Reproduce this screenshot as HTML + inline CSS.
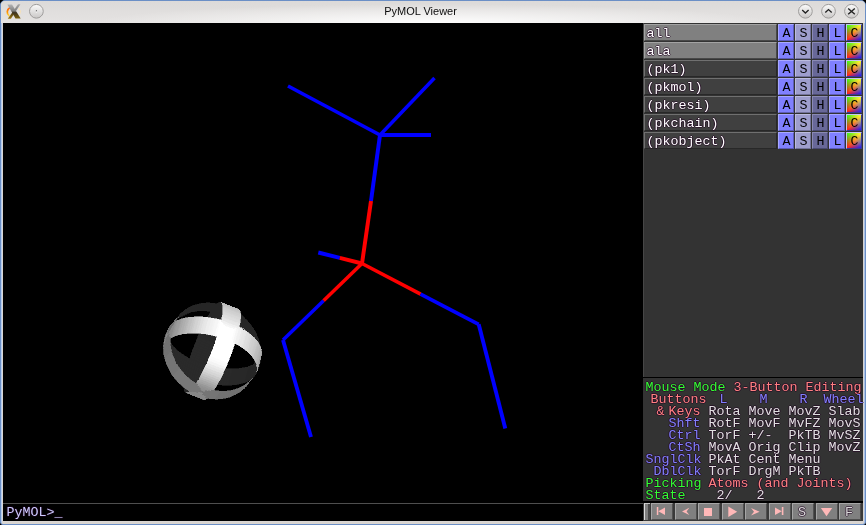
<!DOCTYPE html>
<html><head><meta charset="utf-8"><title>PyMOL Viewer</title>
<style>
html,body{margin:0;padding:0;background:#000;}
body{width:866px;height:525px;position:relative;overflow:hidden;font-family:"Liberation Sans",sans-serif;}
.abs{position:absolute;}
#win{position:absolute;left:0;top:0;width:864px;height:523px;border:1px solid #6b8fc6;border-radius:5px 5px 3px 3px;background:#d9d5d1;box-shadow:inset 1px 1px 0 #b4caec,inset -1px 0 0 #aac2e8;}
#tb{position:absolute;left:1px;top:1px;width:864px;height:22px;background:radial-gradient(ellipse 340px 19px at 50% 100%,rgba(255,255,255,0.95),rgba(255,255,255,0) 100%),linear-gradient(#dcdad9,#e5e3e2);border-radius:4px 4px 0 0;}
#title{position:absolute;left:0;top:4px;width:841px;text-align:center;font-size:11px;color:#0c0c0c;line-height:14px;will-change:transform;}
#view{position:absolute;left:3px;top:23px;width:640px;height:480px;background:#000;}
#cmd{position:absolute;left:3px;top:503px;width:640px;height:18px;background:#000;border-top:1px solid #4e4e4e;box-sizing:border-box;}
#panel{position:absolute;left:643px;top:23px;width:220px;height:498px;background:#333;}
.t{position:absolute;white-space:pre;font-family:"Liberation Mono","DejaVu Sans Mono",monospace;font-size:13.33px;line-height:12px;height:12px;}
.h{text-shadow:1px 0 0 rgba(32,0,32,.55),-1px 0 0 rgba(32,0,32,.55),0 1px 0 rgba(32,0,32,.55),0 -1px 0 rgba(32,0,32,.55);}
.nm{position:absolute;left:644px;width:133px;height:17px;box-sizing:border-box;}
.bt{position:absolute;width:16px;height:17px;box-sizing:border-box;}
</style></head><body>
<div id="win"></div>
<div id="tb"></div>
<div id="title">PyMOL Viewer</div>
<div id="view"></div>
<div id="cmd"></div>
<div id="panel"></div>

<svg class="abs" style="left:0;top:0" width="866" height="24">
<defs>
<linearGradient id="xg1" x1="0" y1="0" x2="0" y2="1"><stop offset="0" stop-color="#b4b4b4"/><stop offset="0.45" stop-color="#808080"/><stop offset="0.58" stop-color="#3c3220"/><stop offset="1" stop-color="#7a5e0a"/></linearGradient>
<linearGradient id="xg2" x1="0" y1="0" x2="0" y2="1"><stop offset="0" stop-color="#a8a8a8"/><stop offset="0.48" stop-color="#7a7a7a"/><stop offset="0.6" stop-color="#4c3a14"/><stop offset="1" stop-color="#a07c12"/></linearGradient>
<linearGradient id="og" x1="0" y1="0" x2="0" y2="1"><stop offset="0" stop-color="#ff5a10"/><stop offset="0.6" stop-color="#ff9a00"/><stop offset="1" stop-color="#ffd840"/></linearGradient>
<linearGradient id="bg1" x1="0" y1="0" x2="0" y2="1"><stop offset="0" stop-color="#fbfbfb"/><stop offset="1" stop-color="#c9c7c6"/></linearGradient>
</defs>
<path d="M10.1 7.4 A7 5.7 0 0 0 9.3 16" fill="none" stroke="url(#og)" stroke-width="1.7"/>
<path d="M18.6 8 A7 5.7 0 0 1 19.6 14.6" fill="none" stroke="#ffe2a8" stroke-width="0.9" opacity="0.85"/>
<path d="M18 4.3 L20.4 4.3 L10.9 18.7 L7.8 18.7 Z" fill="url(#xg2)"/>
<path d="M7.4 4.4 L12 4.4 L20.7 18.6 L15.5 18.6 Z" fill="url(#xg1)"/>

<circle cx="36.4" cy="11.6" r="7.4" fill="#f4f3f2" opacity="0.9"/><circle cx="36.4" cy="11.3" r="6.9" fill="url(#bg1)" stroke="#9b9998" stroke-width="1"/>
<circle cx="805.4" cy="11.6" r="7.4" fill="#f4f3f2" opacity="0.9"/><circle cx="805.4" cy="11.3" r="6.9" fill="url(#bg1)" stroke="#9b9998" stroke-width="1"/>
<circle cx="828.5" cy="11.6" r="7.4" fill="#f4f3f2" opacity="0.9"/><circle cx="828.5" cy="11.3" r="6.9" fill="url(#bg1)" stroke="#9b9998" stroke-width="1"/>
<circle cx="851.5" cy="11.6" r="7.4" fill="#f4f3f2" opacity="0.9"/><circle cx="851.5" cy="11.3" r="6.9" fill="url(#bg1)" stroke="#9b9998" stroke-width="1"/>
<rect x="35.9" y="10.4" width="1.1" height="1.1" fill="#333"/><rect x="35.9" y="11.5" width="1.1" height="1" fill="#fff"/>
<path d="M802.2 10 L805.4 13 L808.6 10" fill="none" stroke="#222" stroke-width="1.35"/>
<path d="M825.3 12.6 L828.5 9.6 L831.7 12.6" fill="none" stroke="#222" stroke-width="1.35"/>
<path d="M848.2 8.4 L854.8 14.2 M854.8 8.4 L848.2 14.2" fill="none" stroke="#222" stroke-width="1.35"/>
</svg>
<svg class="abs" style="left:0;top:0" width="866" height="525">
<line x1="288" y1="86" x2="380" y2="135" stroke="#0000ff" stroke-width="3.66"/>
<line x1="380" y1="135" x2="434.5" y2="78" stroke="#0000ff" stroke-width="3.50"/>
<line x1="380" y1="135" x2="431" y2="135" stroke="#0000ff" stroke-width="4.00"/>
<line x1="380" y1="135" x2="371" y2="201" stroke="#0000ff" stroke-width="3.96"/>
<line x1="371" y1="201" x2="362" y2="263.5" stroke="#ff0000" stroke-width="3.96"/>
<line x1="318.3" y1="252.5" x2="339.8" y2="257.9" stroke="#0000ff" stroke-width="3.89"/>
<line x1="339.8" y1="257.9" x2="362" y2="263.5" stroke="#ff0000" stroke-width="3.89"/>
<line x1="362" y1="263.5" x2="323.5" y2="300.8" stroke="#ff0000" stroke-width="3.50"/>
<line x1="323.5" y1="300.8" x2="283" y2="340" stroke="#0000ff" stroke-width="3.50"/>
<line x1="283" y1="340" x2="311" y2="437" stroke="#0000ff" stroke-width="3.86"/>
<line x1="362" y1="263.5" x2="420.6" y2="294.2" stroke="#ff0000" stroke-width="3.66"/>
<line x1="420.6" y1="294.2" x2="478.7" y2="324.3" stroke="#0000ff" stroke-width="3.67"/>
<line x1="478.7" y1="324.3" x2="505.3" y2="428.5" stroke="#0000ff" stroke-width="3.89"/>
</svg>
<svg class="abs" style="left:0;top:0" width="866" height="525" shape-rendering="crispEdges" stroke-width="0.6">
<g fill="#262626" stroke="#262626"><polygon points="220.9,302.5 220.5,302.4 224.9,304.1 225.4,304.3"/><polygon points="225.4,304.3 224.9,304.1 229.3,305.9 229.8,306.0"/><polygon points="229.8,306.0 229.3,305.9 233.7,307.6 234.2,307.7"/><polygon points="234.2,307.7 233.7,307.6 238.1,309.3 238.6,309.4"/><polygon points="220.5,302.4 219.9,302.4 224.4,304.2 224.9,304.1"/><polygon points="224.9,304.1 224.4,304.2 228.8,305.9 229.3,305.9"/><polygon points="229.3,305.9 228.8,305.9 233.2,307.6 233.7,307.6"/><polygon points="233.7,307.6 233.2,307.6 237.6,309.3 238.1,309.3"/><polygon points="219.9,302.4 219.4,302.6 223.8,304.3 224.4,304.2"/><polygon points="224.4,304.2 223.8,304.3 228.2,306.0 228.8,305.9"/><polygon points="228.8,305.9 228.2,306.0 232.6,307.7 233.2,307.6"/><polygon points="233.2,307.6 232.6,307.7 237.1,309.4 237.6,309.3"/><polygon points="219.4,302.6 218.8,302.8 223.2,304.5 223.8,304.3"/><polygon points="223.8,304.3 223.2,304.5 227.6,306.3 228.2,306.0"/><polygon points="228.2,306.0 227.6,306.3 232.0,308.0 232.6,307.7"/><polygon points="232.6,307.7 232.0,308.0 236.4,309.7 237.1,309.4"/><polygon points="218.8,302.8 218.1,303.2 222.5,304.9 223.2,304.5"/><polygon points="223.2,304.5 222.5,304.9 227.0,306.6 227.6,306.3"/><polygon points="227.6,306.3 227.0,306.6 231.4,308.4 232.0,308.0"/><polygon points="232.0,308.0 231.4,308.4 235.8,310.1 236.4,309.7"/><polygon points="218.1,303.2 217.4,303.7 221.8,305.4 222.5,304.9"/><polygon points="222.5,304.9 221.8,305.4 226.3,307.1 227.0,306.6"/><polygon points="227.0,306.6 226.3,307.1 230.7,308.9 231.4,308.4"/><polygon points="231.4,308.4 230.7,308.9 235.1,310.6 235.8,310.1"/><polygon points="217.4,303.7 216.7,304.3 221.1,306.0 221.8,305.4"/><polygon points="221.8,305.4 221.1,306.0 225.5,307.8 226.3,307.1"/><polygon points="226.3,307.1 225.5,307.8 230.0,309.5 230.7,308.9"/><polygon points="230.7,308.9 230.0,309.5 234.4,311.2 235.1,310.6"/><polygon points="216.7,304.3 215.9,305.1 220.3,306.8 221.1,306.0"/><polygon points="221.1,306.0 220.3,306.8 224.8,308.5 225.5,307.8"/><polygon points="225.5,307.8 224.8,308.5 229.2,310.2 230.0,309.5"/><polygon points="230.0,309.5 229.2,310.2 233.6,311.9 234.4,311.2"/><polygon points="215.9,305.1 215.1,305.9 219.5,307.6 220.3,306.8"/><polygon points="220.3,306.8 219.5,307.6 224.0,309.4 224.8,308.5"/><polygon points="224.8,308.5 224.0,309.4 228.4,311.1 229.2,310.2"/><polygon points="229.2,310.2 228.4,311.1 232.8,312.8 233.6,311.9"/><polygon points="215.1,305.9 214.3,306.9 218.7,308.6 219.5,307.6"/><polygon points="219.5,307.6 218.7,308.6 223.1,310.3 224.0,309.4"/><polygon points="224.0,309.4 223.1,310.3 227.6,312.0 228.4,311.1"/><polygon points="228.4,311.1 227.6,312.0 232.0,313.8 232.8,312.8"/><polygon points="214.3,306.9 213.4,308.0 217.9,309.7 218.7,308.6"/><polygon points="218.7,308.6 217.9,309.7 222.3,311.4 223.1,310.3"/><polygon points="223.1,310.3 222.3,311.4 226.7,313.1 227.6,312.0"/><polygon points="227.6,312.0 226.7,313.1 231.1,314.8 232.0,313.8"/><polygon points="213.4,308.0 212.5,309.2 217.0,310.9 217.9,309.7"/><polygon points="217.9,309.7 217.0,310.9 221.4,312.6 222.3,311.4"/><polygon points="222.3,311.4 221.4,312.6 225.8,314.3 226.7,313.1"/><polygon points="226.7,313.1 225.8,314.3 230.2,316.0 231.1,314.8"/><polygon points="212.5,309.2 211.6,310.5 216.0,312.2 217.0,310.9"/><polygon points="217.0,310.9 216.0,312.2 220.5,313.9 221.4,312.6"/><polygon points="221.4,312.6 220.5,313.9 224.9,315.6 225.8,314.3"/><polygon points="225.8,314.3 224.9,315.6 229.3,317.3 230.2,316.0"/><polygon points="211.6,310.5 210.7,311.9 215.1,313.6 216.0,312.2"/><polygon points="216.0,312.2 215.1,313.6 219.5,315.3 220.5,313.9"/><polygon points="220.5,313.9 219.5,315.3 224.0,317.0 224.9,315.6"/><polygon points="224.9,315.6 224.0,317.0 228.4,318.7 229.3,317.3"/><polygon points="210.7,311.9 209.7,313.4 214.2,315.1 215.1,313.6"/><polygon points="215.1,313.6 214.2,315.1 218.6,316.8 219.5,315.3"/><polygon points="219.5,315.3 218.6,316.8 223.0,318.5 224.0,317.0"/><polygon points="224.0,317.0 223.0,318.5 227.4,320.2 228.4,318.7"/><polygon points="209.7,313.4 208.8,315.0 213.2,316.7 214.2,315.1"/><polygon points="214.2,315.1 213.2,316.7 217.6,318.4 218.6,316.8"/><polygon points="218.6,316.8 217.6,318.4 222.0,320.1 223.0,318.5"/><polygon points="223.0,318.5 222.0,320.1 226.4,321.8 227.4,320.2"/><polygon points="208.8,315.0 207.8,316.6 212.2,318.3 213.2,316.7"/><polygon points="213.2,316.7 212.2,318.3 216.6,320.1 217.6,318.4"/><polygon points="217.6,318.4 216.6,320.1 221.0,321.8 222.0,320.1"/><polygon points="222.0,320.1 221.0,321.8 225.5,323.5 226.4,321.8"/><polygon points="207.8,316.6 206.8,318.4 211.2,320.1 212.2,318.3"/><polygon points="212.2,318.3 211.2,320.1 215.6,321.8 216.6,320.1"/><polygon points="216.6,320.1 215.6,321.8 220.0,323.5 221.0,321.8"/><polygon points="221.0,321.8 220.0,323.5 224.5,325.3 225.5,323.5"/><polygon points="261.1,355.6 260.7,356.7 259.6,360.8 260.0,359.6"/><polygon points="260.0,359.6 259.6,360.8 258.5,364.9 258.9,363.7"/><polygon points="258.9,363.7 258.5,364.9 257.4,368.9 257.8,367.8"/><polygon points="257.8,367.8 257.4,368.9 256.3,373.0 256.7,371.8"/><polygon points="260.7,356.7 260.1,357.9 259.0,361.9 259.6,360.8"/><polygon points="259.6,360.8 259.0,361.9 257.9,366.0 258.5,364.9"/><polygon points="258.5,364.9 257.9,366.0 256.9,370.1 257.4,368.9"/><polygon points="257.4,368.9 256.9,370.1 255.8,374.1 256.3,373.0"/><polygon points="260.1,357.9 259.5,359.0 258.4,363.0 259.0,361.9"/><polygon points="259.0,361.9 258.4,363.0 257.3,367.1 257.9,366.0"/><polygon points="257.9,366.0 257.3,367.1 256.2,371.2 256.9,370.1"/><polygon points="256.9,370.1 256.2,371.2 255.1,375.2 255.8,374.1"/><polygon points="259.5,359.0 258.7,360.0 257.6,364.1 258.4,363.0"/><polygon points="258.4,363.0 257.6,364.1 256.5,368.2 257.3,367.1"/><polygon points="257.3,367.1 256.5,368.2 255.4,372.2 256.2,371.2"/><polygon points="256.2,371.2 255.4,372.2 254.3,376.3 255.1,375.2"/><polygon points="258.7,360.0 257.8,361.0 256.7,365.1 257.6,364.1"/><polygon points="257.6,364.1 256.7,365.1 255.6,369.2 256.5,368.2"/><polygon points="256.5,368.2 255.6,369.2 254.5,373.2 255.4,372.2"/><polygon points="255.4,372.2 254.5,373.2 253.4,377.3 254.3,376.3"/><polygon points="257.8,361.0 256.7,362.0 255.6,366.0 256.7,365.1"/><polygon points="256.7,365.1 255.6,366.0 254.6,370.1 255.6,369.2"/><polygon points="255.6,369.2 254.6,370.1 253.5,374.2 254.5,373.2"/><polygon points="254.5,373.2 253.5,374.2 252.4,378.2 253.4,377.3"/><polygon points="256.7,362.0 255.6,362.9 254.5,366.9 255.6,366.0"/><polygon points="255.6,366.0 254.5,366.9 253.4,371.0 254.6,370.1"/><polygon points="254.6,370.1 253.4,371.0 252.3,375.1 253.5,374.2"/><polygon points="253.5,374.2 252.3,375.1 251.3,379.1 252.4,378.2"/><polygon points="255.6,362.9 254.3,363.7 253.2,367.8 254.5,366.9"/><polygon points="254.5,366.9 253.2,367.8 252.2,371.9 253.4,371.0"/><polygon points="253.4,371.0 252.2,371.9 251.1,375.9 252.3,375.1"/><polygon points="252.3,375.1 251.1,375.9 250.0,380.0 251.3,379.1"/><polygon points="254.3,363.7 253.0,364.5 251.9,368.6 253.2,367.8"/><polygon points="253.2,367.8 251.9,368.6 250.8,372.6 252.2,371.9"/><polygon points="252.2,371.9 250.8,372.6 249.7,376.7 251.1,375.9"/><polygon points="251.1,375.9 249.7,376.7 248.6,380.8 250.0,380.0"/><polygon points="253.0,364.5 251.5,365.2 250.4,369.3 251.9,368.6"/><polygon points="251.9,368.6 250.4,369.3 249.3,373.4 250.8,372.6"/><polygon points="250.8,372.6 249.3,373.4 248.2,377.4 249.7,376.7"/><polygon points="249.7,376.7 248.2,377.4 247.2,381.5 248.6,380.8"/><polygon points="251.5,365.2 249.9,365.9 248.8,370.0 250.4,369.3"/><polygon points="250.4,369.3 248.8,370.0 247.8,374.0 249.3,373.4"/><polygon points="249.3,373.4 247.8,374.0 246.7,378.1 248.2,377.4"/><polygon points="248.2,377.4 246.7,378.1 245.6,382.2 247.2,381.5"/><polygon points="249.9,365.9 248.3,366.5 247.2,370.6 248.8,370.0"/><polygon points="248.8,370.0 247.2,370.6 246.1,374.6 247.8,374.0"/><polygon points="247.8,374.0 246.1,374.6 245.0,378.7 246.7,378.1"/><polygon points="246.7,378.1 245.0,378.7 243.9,382.8 245.6,382.2"/><polygon points="253.3,372.1 252.6,374.2 254.3,372.2 254.9,370.1"/><polygon points="254.9,370.1 254.3,372.2 255.9,370.3 256.5,368.2"/><polygon points="256.5,368.2 255.9,370.3 257.5,368.3 258.1,366.2"/><polygon points="258.1,366.2 257.5,368.3 259.1,366.3 259.7,364.2"/><polygon points="252.6,374.2 251.9,376.2 253.5,374.3 254.3,372.2"/><polygon points="254.3,372.2 253.5,374.3 255.1,372.3 255.9,370.3"/><polygon points="255.9,370.3 255.1,372.3 256.7,370.3 257.5,368.3"/><polygon points="257.5,368.3 256.7,370.3 258.4,368.4 259.1,366.3"/><polygon points="251.9,376.2 251.0,378.2 252.6,376.3 253.5,374.3"/><polygon points="253.5,374.3 252.6,376.3 254.3,374.3 255.1,372.3"/><polygon points="255.1,372.3 254.3,374.3 255.9,372.3 256.7,370.3"/><polygon points="256.7,370.3 255.9,372.3 257.5,370.4 258.4,368.4"/><polygon points="251.0,378.2 250.0,380.2 251.7,378.2 252.6,376.3"/><polygon points="252.6,376.3 251.7,378.2 253.3,376.2 254.3,374.3"/><polygon points="254.3,374.3 253.3,376.2 254.9,374.3 255.9,372.3"/><polygon points="255.9,372.3 254.9,374.3 256.5,372.3 257.5,370.4"/><polygon points="250.0,380.2 248.9,382.0 250.6,380.1 251.7,378.2"/><polygon points="251.7,378.2 250.6,380.1 252.2,378.1 253.3,376.2"/><polygon points="253.3,376.2 252.2,378.1 253.8,376.1 254.9,374.3"/><polygon points="254.9,374.3 253.8,376.1 255.4,374.2 256.5,372.3"/><polygon points="248.9,382.0 247.7,383.8 249.4,381.8 250.6,380.1"/><polygon points="250.6,380.1 249.4,381.8 251.0,379.9 252.2,378.1"/><polygon points="252.2,378.1 251.0,379.9 252.6,377.9 253.8,376.1"/><polygon points="253.8,376.1 252.6,377.9 254.2,376.0 255.4,374.2"/><polygon points="247.7,383.8 246.4,385.5 248.1,383.6 249.4,381.8"/><polygon points="249.4,381.8 248.1,383.6 249.7,381.6 251.0,379.9"/><polygon points="251.0,379.9 249.7,381.6 251.3,379.6 252.6,377.9"/><polygon points="252.6,377.9 251.3,379.6 252.9,377.7 254.2,376.0"/><polygon points="171.7,324.3 173.1,322.7 174.7,320.7 173.3,322.4"/><polygon points="173.3,322.4 174.7,320.7 176.3,318.8 174.9,320.4"/><polygon points="174.9,320.4 176.3,318.8 177.9,316.8 176.5,318.4"/><polygon points="176.5,318.4 177.9,316.8 179.6,314.9 178.2,316.5"/><polygon points="173.1,322.7 174.6,321.2 176.2,319.2 174.7,320.7"/><polygon points="174.7,320.7 176.2,319.2 177.8,317.3 176.3,318.8"/><polygon points="176.3,318.8 177.8,317.3 179.5,315.3 177.9,316.8"/><polygon points="177.9,316.8 179.5,315.3 181.1,313.3 179.6,314.9"/><polygon points="174.6,321.2 176.2,319.7 177.8,317.8 176.2,319.2"/><polygon points="176.2,319.2 177.8,317.8 179.4,315.8 177.8,317.3"/><polygon points="177.8,317.3 179.4,315.8 181.1,313.8 179.5,315.3"/><polygon points="179.5,315.3 181.1,313.8 182.7,311.9 181.1,313.3"/><polygon points="176.2,319.7 177.9,318.4 179.5,316.4 177.8,317.8"/><polygon points="177.8,317.8 179.5,316.4 181.1,314.5 179.4,315.8"/><polygon points="179.4,315.8 181.1,314.5 182.8,312.5 181.1,313.8"/><polygon points="181.1,313.8 182.8,312.5 184.4,310.5 182.7,311.9"/><polygon points="177.9,318.4 179.7,317.1 181.3,315.2 179.5,316.4"/><polygon points="179.5,316.4 181.3,315.2 182.9,313.2 181.1,314.5"/><polygon points="181.1,314.5 182.9,313.2 184.5,311.3 182.8,312.5"/><polygon points="182.8,312.5 184.5,311.3 186.1,309.3 184.4,310.5"/><polygon points="179.7,317.1 181.5,316.0 183.2,314.0 181.3,315.2"/><polygon points="181.3,315.2 183.2,314.0 184.8,312.1 182.9,313.2"/><polygon points="182.9,313.2 184.8,312.1 186.4,310.1 184.5,311.3"/><polygon points="184.5,311.3 186.4,310.1 188.0,308.2 186.1,309.3"/><polygon points="181.5,316.0 183.5,315.0 185.1,313.0 183.2,314.0"/><polygon points="183.2,314.0 185.1,313.0 186.7,311.0 184.8,312.1"/><polygon points="184.8,312.1 186.7,311.0 188.3,309.1 186.4,310.1"/><polygon points="186.4,310.1 188.3,309.1 189.9,307.1 188.0,308.2"/><polygon points="183.5,315.0 185.5,314.0 187.1,312.1 185.1,313.0"/><polygon points="185.1,313.0 187.1,312.1 188.7,310.1 186.7,311.0"/><polygon points="186.7,311.0 188.7,310.1 190.3,308.2 188.3,309.1"/><polygon points="188.3,309.1 190.3,308.2 191.9,306.2 189.9,307.1"/><polygon points="185.5,314.0 187.5,313.2 189.2,311.3 187.1,312.1"/><polygon points="187.1,312.1 189.2,311.3 190.8,309.3 188.7,310.1"/><polygon points="188.7,310.1 190.8,309.3 192.4,307.3 190.3,308.2"/><polygon points="190.3,308.2 192.4,307.3 194.0,305.4 191.9,306.2"/><polygon points="187.5,313.2 189.7,312.5 191.3,310.6 189.2,311.3"/><polygon points="189.2,311.3 191.3,310.6 192.9,308.6 190.8,309.3"/><polygon points="190.8,309.3 192.9,308.6 194.5,306.6 192.4,307.3"/><polygon points="192.4,307.3 194.5,306.6 196.1,304.7 194.0,305.4"/><polygon points="189.7,312.5 191.8,311.9 193.5,310.0 191.3,310.6"/><polygon points="191.3,310.6 193.5,310.0 195.1,308.0 192.9,308.6"/><polygon points="192.9,308.6 195.1,308.0 196.7,306.1 194.5,306.6"/><polygon points="194.5,306.6 196.7,306.1 198.3,304.1 196.1,304.7"/><polygon points="191.8,311.9 194.1,311.5 195.7,309.5 193.5,310.0"/><polygon points="193.5,310.0 195.7,309.5 197.3,307.5 195.1,308.0"/><polygon points="195.1,308.0 197.3,307.5 198.9,305.6 196.7,306.1"/><polygon points="196.7,306.1 198.9,305.6 200.6,303.6 198.3,304.1"/><polygon points="194.1,311.5 196.3,311.1 198.0,309.2 195.7,309.5"/><polygon points="195.7,309.5 198.0,309.2 199.6,307.2 197.3,307.5"/><polygon points="197.3,307.5 199.6,307.2 201.2,305.2 198.9,305.6"/><polygon points="198.9,305.6 201.2,305.2 202.8,303.3 200.6,303.6"/><polygon points="196.3,311.1 198.7,310.9 200.3,308.9 198.0,309.2"/><polygon points="198.0,309.2 200.3,308.9 201.9,307.0 199.6,307.2"/><polygon points="199.6,307.2 201.9,307.0 203.5,305.0 201.2,305.2"/><polygon points="201.2,305.2 203.5,305.0 205.1,303.1 202.8,303.3"/><polygon points="198.7,310.9 201.0,310.8 202.6,308.8 200.3,308.9"/><polygon points="200.3,308.9 202.6,308.8 204.2,306.9 201.9,307.0"/><polygon points="201.9,307.0 204.2,306.9 205.8,304.9 203.5,305.0"/><polygon points="203.5,305.0 205.8,304.9 207.5,302.9 205.1,303.1"/><polygon points="201.0,310.8 203.3,310.8 205.0,308.8 202.6,308.8"/><polygon points="202.6,308.8 205.0,308.8 206.6,306.9 204.2,306.9"/><polygon points="204.2,306.9 206.6,306.9 208.2,304.9 205.8,304.9"/><polygon points="205.8,304.9 208.2,304.9 209.8,303.0 207.5,302.9"/><polygon points="203.3,310.8 205.7,310.9 207.3,309.0 205.0,308.8"/><polygon points="205.0,308.8 207.3,309.0 208.9,307.0 206.6,306.9"/><polygon points="206.6,306.9 208.9,307.0 210.6,305.1 208.2,304.9"/><polygon points="208.2,304.9 210.6,305.1 212.2,303.1 209.8,303.0"/><polygon points="205.7,310.9 208.1,311.2 209.7,309.2 207.3,309.0"/><polygon points="207.3,309.0 209.7,309.2 211.3,307.3 208.9,307.0"/><polygon points="208.9,307.0 211.3,307.3 212.9,305.3 210.6,305.1"/><polygon points="210.6,305.1 212.9,305.3 214.6,303.4 212.2,303.1"/><polygon points="208.1,311.2 210.5,311.6 212.1,309.6 209.7,309.2"/><polygon points="209.7,309.2 212.1,309.6 213.7,307.7 211.3,307.3"/><polygon points="211.3,307.3 213.7,307.7 215.3,305.7 212.9,305.3"/><polygon points="212.9,305.3 215.3,305.7 216.9,303.7 214.6,303.4"/><polygon points="210.5,311.6 212.8,312.1 214.5,310.1 212.1,309.6"/><polygon points="212.1,309.6 214.5,310.1 216.1,308.1 213.7,307.7"/><polygon points="213.7,307.7 216.1,308.1 217.7,306.2 215.3,305.7"/><polygon points="215.3,305.7 217.7,306.2 219.3,304.2 216.9,303.7"/><polygon points="212.8,312.1 215.2,312.7 216.8,310.7 214.5,310.1"/><polygon points="214.5,310.1 216.8,310.7 218.5,308.8 216.1,308.1"/><polygon points="216.1,308.1 218.5,308.8 220.1,306.8 217.7,306.2"/><polygon points="217.7,306.2 220.1,306.8 221.7,304.8 219.3,304.2"/><polygon points="215.2,312.7 217.6,313.4 219.2,311.5 216.8,310.7"/><polygon points="216.8,310.7 219.2,311.5 220.8,309.5 218.5,308.8"/><polygon points="218.5,308.8 220.8,309.5 222.4,307.5 220.1,306.8"/><polygon points="220.1,306.8 222.4,307.5 224.0,305.6 221.7,304.8"/><polygon points="217.6,313.4 219.9,314.3 221.5,312.3 219.2,311.5"/><polygon points="219.2,311.5 221.5,312.3 223.1,310.3 220.8,309.5"/><polygon points="220.8,309.5 223.1,310.3 224.8,308.4 222.4,307.5"/><polygon points="222.4,307.5 224.8,308.4 226.4,306.4 224.0,305.6"/><polygon points="219.9,314.3 222.2,315.2 223.8,313.2 221.5,312.3"/><polygon points="221.5,312.3 223.8,313.2 225.4,311.3 223.1,310.3"/><polygon points="223.1,310.3 225.4,311.3 227.1,309.3 224.8,308.4"/><polygon points="224.8,308.4 227.1,309.3 228.7,307.4 226.4,306.4"/><polygon points="222.2,315.2 224.5,316.3 226.1,314.3 223.8,313.2"/><polygon points="223.8,313.2 226.1,314.3 227.7,312.3 225.4,311.3"/><polygon points="225.4,311.3 227.7,312.3 229.3,310.4 227.1,309.3"/><polygon points="227.1,309.3 229.3,310.4 230.9,308.4 228.7,307.4"/><polygon points="224.5,316.3 226.7,317.4 228.3,315.5 226.1,314.3"/><polygon points="226.1,314.3 228.3,315.5 229.9,313.5 227.7,312.3"/><polygon points="227.7,312.3 229.9,313.5 231.5,311.6 229.3,310.4"/><polygon points="229.3,310.4 231.5,311.6 233.2,309.6 230.9,308.4"/><polygon points="226.7,317.4 228.8,318.7 230.5,316.7 228.3,315.5"/><polygon points="228.3,315.5 230.5,316.7 232.1,314.8 229.9,313.5"/><polygon points="229.9,313.5 232.1,314.8 233.7,312.8 231.5,311.6"/><polygon points="231.5,311.6 233.7,312.8 235.3,310.9 233.2,309.6"/><polygon points="228.8,318.7 231.0,320.1 232.6,318.1 230.5,316.7"/><polygon points="230.5,316.7 232.6,318.1 234.2,316.2 232.1,314.8"/><polygon points="232.1,314.8 234.2,316.2 235.8,314.2 233.7,312.8"/><polygon points="233.7,312.8 235.8,314.2 237.4,312.2 235.3,310.9"/><polygon points="231.0,320.1 233.0,321.5 234.6,319.6 232.6,318.1"/><polygon points="232.6,318.1 234.6,319.6 236.3,317.6 234.2,316.2"/><polygon points="234.2,316.2 236.3,317.6 237.9,315.7 235.8,314.2"/><polygon points="235.8,314.2 237.9,315.7 239.5,313.7 237.4,312.2"/><polygon points="233.0,321.5 235.0,323.1 236.6,321.1 234.6,319.6"/><polygon points="234.6,319.6 236.6,321.1 238.3,319.2 236.3,317.6"/><polygon points="236.3,317.6 238.3,319.2 239.9,317.2 237.9,315.7"/><polygon points="237.9,315.7 239.9,317.2 241.5,315.3 239.5,313.7"/><polygon points="235.0,323.1 236.9,324.7 238.6,322.8 236.6,321.1"/><polygon points="236.6,321.1 238.6,322.8 240.2,320.8 238.3,319.2"/><polygon points="238.3,319.2 240.2,320.8 241.8,318.9 239.9,317.2"/><polygon points="239.9,317.2 241.8,318.9 243.4,316.9 241.5,315.3"/><polygon points="236.9,324.7 238.8,326.5 240.4,324.5 238.6,322.8"/><polygon points="238.6,322.8 240.4,324.5 242.0,322.6 240.2,320.8"/><polygon points="240.2,320.8 242.0,322.6 243.6,320.6 241.8,318.9"/><polygon points="241.8,318.9 243.6,320.6 245.3,318.6 243.4,316.9"/><polygon points="238.8,326.5 240.5,328.3 242.2,326.3 240.4,324.5"/><polygon points="240.4,324.5 242.2,326.3 243.8,324.4 242.0,322.6"/><polygon points="242.0,322.6 243.8,324.4 245.4,322.4 243.6,320.6"/><polygon points="243.6,320.6 245.4,322.4 247.0,320.4 245.3,318.6"/><polygon points="240.5,328.3 242.2,330.2 243.8,328.2 242.2,326.3"/><polygon points="242.2,326.3 243.8,328.2 245.5,326.2 243.8,324.4"/><polygon points="243.8,324.4 245.5,326.2 247.1,324.3 245.4,322.4"/><polygon points="245.4,322.4 247.1,324.3 248.7,322.3 247.0,320.4"/><polygon points="242.2,330.2 243.8,332.1 245.4,330.1 243.8,328.2"/><polygon points="243.8,328.2 245.4,330.1 247.0,328.2 245.5,326.2"/><polygon points="245.5,326.2 247.0,328.2 248.7,326.2 247.1,324.3"/><polygon points="247.1,324.3 248.7,326.2 250.3,324.3 248.7,322.3"/><polygon points="243.8,332.1 245.3,334.1 246.9,332.2 245.4,330.1"/><polygon points="245.4,330.1 246.9,332.2 248.5,330.2 247.0,328.2"/><polygon points="247.0,328.2 248.5,330.2 250.2,328.2 248.7,326.2"/><polygon points="248.7,326.2 250.2,328.2 251.8,326.3 250.3,324.3"/><polygon points="245.3,334.1 246.7,336.2 248.3,334.2 246.9,332.2"/><polygon points="246.9,332.2 248.3,334.2 249.9,332.3 248.5,330.2"/><polygon points="248.5,330.2 249.9,332.3 251.5,330.3 250.2,328.2"/><polygon points="250.2,328.2 251.5,330.3 253.2,328.3 251.8,326.3"/><polygon points="246.7,336.2 248.0,338.3 249.6,336.3 248.3,334.2"/><polygon points="248.3,334.2 249.6,336.3 251.2,334.4 249.9,332.3"/><polygon points="249.9,332.3 251.2,334.4 252.8,332.4 251.5,330.3"/><polygon points="251.5,330.3 252.8,332.4 254.5,330.4 253.2,328.3"/><polygon points="248.0,338.3 249.2,340.5 250.8,338.5 249.6,336.3"/><polygon points="249.6,336.3 250.8,338.5 252.4,336.5 251.2,334.4"/><polygon points="251.2,334.4 252.4,336.5 254.0,334.6 252.8,332.4"/><polygon points="252.8,332.4 254.0,334.6 255.6,332.6 254.5,330.4"/><polygon points="249.2,340.5 250.2,342.7 251.8,340.7 250.8,338.5"/><polygon points="250.8,338.5 251.8,340.7 253.5,338.7 252.4,336.5"/><polygon points="252.4,336.5 253.5,338.7 255.1,336.8 254.0,334.6"/><polygon points="254.0,334.6 255.1,336.8 256.7,334.8 255.6,332.6"/><polygon points="250.2,342.7 251.2,344.9 252.8,342.9 251.8,340.7"/><polygon points="251.8,340.7 252.8,342.9 254.4,341.0 253.5,338.7"/><polygon points="253.5,338.7 254.4,341.0 256.0,339.0 255.1,336.8"/><polygon points="255.1,336.8 256.0,339.0 257.7,337.1 256.7,334.8"/><polygon points="251.2,344.9 252.0,347.2 253.6,345.2 252.8,342.9"/><polygon points="252.8,342.9 253.6,345.2 255.3,343.2 254.4,341.0"/><polygon points="254.4,341.0 255.3,343.2 256.9,341.3 256.0,339.0"/><polygon points="256.0,339.0 256.9,341.3 258.5,339.3 257.7,337.1"/><polygon points="252.0,347.2 252.8,349.4 254.4,347.5 253.6,345.2"/><polygon points="253.6,345.2 254.4,347.5 256.0,345.5 255.3,343.2"/><polygon points="255.3,343.2 256.0,345.5 257.6,343.6 256.9,341.3"/><polygon points="256.9,341.3 257.6,343.6 259.2,341.6 258.5,339.3"/><polygon points="252.8,349.4 253.4,351.7 255.0,349.8 254.4,347.5"/><polygon points="254.4,347.5 255.0,349.8 256.6,347.8 256.0,345.5"/><polygon points="256.0,345.5 256.6,347.8 258.2,345.9 257.6,343.6"/><polygon points="257.6,343.6 258.2,345.9 259.8,343.9 259.2,341.6"/><polygon points="253.4,351.7 253.8,354.1 255.5,352.1 255.0,349.8"/><polygon points="255.0,349.8 255.5,352.1 257.1,350.1 256.6,347.8"/><polygon points="256.6,347.8 257.1,350.1 258.7,348.2 258.2,345.9"/><polygon points="258.2,345.9 258.7,348.2 260.3,346.2 259.8,343.9"/><polygon points="253.8,354.1 254.2,356.4 255.8,354.4 255.5,352.1"/><polygon points="255.5,352.1 255.8,354.4 257.4,352.4 257.1,350.1"/><polygon points="257.1,350.1 257.4,352.4 259.1,350.5 258.7,348.2"/><polygon points="258.7,348.2 259.1,350.5 260.7,348.5 260.3,346.2"/><polygon points="254.2,356.4 254.4,358.7 256.1,356.7 255.8,354.4"/><polygon points="255.8,354.4 256.1,356.7 257.7,354.7 257.4,352.4"/><polygon points="257.4,352.4 257.7,354.7 259.3,352.8 259.1,350.5"/><polygon points="259.1,350.5 259.3,352.8 260.9,350.8 260.7,348.5"/><polygon points="254.4,358.7 254.6,361.0 256.2,359.0 256.1,356.7"/><polygon points="256.1,356.7 256.2,359.0 257.8,357.0 257.7,354.7"/><polygon points="257.7,354.7 257.8,357.0 259.4,355.1 259.3,352.8"/><polygon points="259.3,352.8 259.4,355.1 261.0,353.1 260.9,350.8"/><polygon points="254.6,361.0 254.5,363.2 256.2,361.3 256.2,359.0"/><polygon points="256.2,359.0 256.2,361.3 257.8,359.3 257.8,357.0"/><polygon points="257.8,357.0 257.8,359.3 259.4,357.4 259.4,355.1"/><polygon points="259.4,355.1 259.4,357.4 261.0,355.4 261.0,353.1"/><polygon points="254.5,363.2 254.4,365.5 256.0,363.5 256.2,361.3"/><polygon points="256.2,361.3 256.0,363.5 257.6,361.6 257.8,359.3"/><polygon points="257.8,359.3 257.6,361.6 259.3,359.6 259.4,357.4"/><polygon points="259.4,357.4 259.3,359.6 260.9,357.7 261.0,355.4"/><polygon points="254.4,365.5 254.2,367.7 255.8,365.8 256.0,363.5"/><polygon points="256.0,363.5 255.8,365.8 257.4,363.8 257.6,361.6"/><polygon points="257.6,361.6 257.4,363.8 259.0,361.8 259.3,359.6"/><polygon points="259.3,359.6 259.0,361.8 260.6,359.9 260.9,357.7"/><polygon points="254.2,367.7 253.8,369.9 255.4,368.0 255.8,365.8"/><polygon points="255.8,365.8 255.4,368.0 257.0,366.0 257.4,363.8"/><polygon points="257.4,363.8 257.0,366.0 258.6,364.0 259.0,361.8"/><polygon points="259.0,361.8 258.6,364.0 260.2,362.1 260.6,359.9"/><polygon points="253.8,369.9 253.3,372.1 254.9,370.1 255.4,368.0"/><polygon points="255.4,368.0 254.9,370.1 256.5,368.2 257.0,366.0"/><polygon points="257.0,366.0 256.5,368.2 258.1,366.2 258.6,364.0"/><polygon points="258.6,364.0 258.1,366.2 259.7,364.2 260.2,362.1"/></g>
<g fill="#282828" stroke="#282828"><polygon points="206.8,318.4 205.8,320.2 210.2,322.0 211.2,320.1"/><polygon points="211.2,320.1 210.2,322.0 214.6,323.7 215.6,321.8"/><polygon points="215.6,321.8 214.6,323.7 219.0,325.4 220.0,323.5"/><polygon points="220.0,323.5 219.0,325.4 223.4,327.1 224.5,325.3"/><polygon points="205.8,320.2 204.7,322.2 209.2,323.9 210.2,322.0"/><polygon points="210.2,322.0 209.2,323.9 213.6,325.6 214.6,323.7"/><polygon points="214.6,323.7 213.6,325.6 218.0,327.3 219.0,325.4"/><polygon points="219.0,325.4 218.0,327.3 222.4,329.0 223.4,327.1"/><polygon points="204.7,322.2 203.7,324.1 208.2,325.9 209.2,323.9"/><polygon points="209.2,323.9 208.2,325.9 212.6,327.6 213.6,325.6"/><polygon points="213.6,325.6 212.6,327.6 217.0,329.3 218.0,327.3"/><polygon points="218.0,327.3 217.0,329.3 221.4,331.0 222.4,329.0"/><polygon points="203.7,324.1 202.7,326.2 207.1,327.9 208.2,325.9"/><polygon points="208.2,325.9 207.1,327.9 211.6,329.6 212.6,327.6"/><polygon points="212.6,327.6 211.6,329.6 216.0,331.3 217.0,329.3"/><polygon points="217.0,329.3 216.0,331.3 220.4,333.1 221.4,331.0"/><polygon points="202.7,326.2 201.7,328.3 206.1,330.0 207.1,327.9"/><polygon points="207.1,327.9 206.1,330.0 210.5,331.7 211.6,329.6"/><polygon points="211.6,329.6 210.5,331.7 215.0,333.5 216.0,331.3"/><polygon points="216.0,331.3 215.0,333.5 219.4,335.2 220.4,333.1"/><polygon points="201.7,328.3 200.7,330.5 205.1,332.2 206.1,330.0"/><polygon points="206.1,330.0 205.1,332.2 209.5,333.9 210.5,331.7"/><polygon points="210.5,331.7 209.5,333.9 213.9,335.6 215.0,333.5"/><polygon points="215.0,333.5 213.9,335.6 218.4,337.3 219.4,335.2"/><polygon points="200.7,330.5 199.7,332.7 204.1,334.4 205.1,332.2"/><polygon points="205.1,332.2 204.1,334.4 208.5,336.1 209.5,333.9"/><polygon points="209.5,333.9 208.5,336.1 212.9,337.8 213.9,335.6"/><polygon points="213.9,335.6 212.9,337.8 217.4,339.5 218.4,337.3"/><polygon points="199.7,332.7 198.7,334.9 203.1,336.6 204.1,334.4"/><polygon points="204.1,334.4 203.1,336.6 207.5,338.4 208.5,336.1"/><polygon points="208.5,336.1 207.5,338.4 211.9,340.1 212.9,337.8"/><polygon points="212.9,337.8 211.9,340.1 216.4,341.8 217.4,339.5"/><polygon points="198.7,334.9 197.7,337.2 202.1,338.9 203.1,336.6"/><polygon points="203.1,336.6 202.1,338.9 206.5,340.6 207.5,338.4"/><polygon points="207.5,338.4 206.5,340.6 211.0,342.4 211.9,340.1"/><polygon points="211.9,340.1 211.0,342.4 215.4,344.1 216.4,341.8"/><polygon points="248.3,366.5 246.5,367.1 245.4,371.1 247.2,370.6"/><polygon points="247.2,370.6 245.4,371.1 244.3,375.2 246.1,374.6"/><polygon points="246.1,374.6 244.3,375.2 243.2,379.3 245.0,378.7"/><polygon points="245.0,378.7 243.2,379.3 242.2,383.3 243.9,382.8"/><polygon points="246.5,367.1 244.6,367.5 243.6,371.6 245.4,371.1"/><polygon points="245.4,371.1 243.6,371.6 242.5,375.7 244.3,375.2"/><polygon points="244.3,375.2 242.5,375.7 241.4,379.7 243.2,379.3"/><polygon points="243.2,379.3 241.4,379.7 240.3,383.8 242.2,383.3"/><polygon points="244.6,367.5 242.7,367.9 241.6,372.0 243.6,371.6"/><polygon points="243.6,371.6 241.6,372.0 240.6,376.1 242.5,375.7"/><polygon points="242.5,375.7 240.6,376.1 239.5,380.1 241.4,379.7"/><polygon points="241.4,379.7 239.5,380.1 238.4,384.2 240.3,383.8"/><polygon points="242.7,367.9 240.7,368.3 239.6,372.3 241.6,372.0"/><polygon points="241.6,372.0 239.6,372.3 238.5,376.4 240.6,376.1"/><polygon points="240.6,376.1 238.5,376.4 237.5,380.5 239.5,380.1"/><polygon points="239.5,380.1 237.5,380.5 236.4,384.5 238.4,384.2"/><polygon points="240.7,368.3 238.6,368.5 237.5,372.6 239.6,372.3"/><polygon points="239.6,372.3 237.5,372.6 236.5,376.7 238.5,376.4"/><polygon points="238.5,376.4 236.5,376.7 235.4,380.7 237.5,380.5"/><polygon points="237.5,380.5 235.4,380.7 234.3,384.8 236.4,384.5"/><polygon points="238.6,368.5 236.5,368.7 235.4,372.8 237.5,372.6"/><polygon points="237.5,372.6 235.4,372.8 234.3,376.9 236.5,376.7"/><polygon points="236.5,376.7 234.3,376.9 233.2,380.9 235.4,380.7"/><polygon points="235.4,380.7 233.2,380.9 232.1,385.0 234.3,384.8"/><polygon points="236.5,368.7 234.3,368.9 233.2,372.9 235.4,372.8"/><polygon points="235.4,372.8 233.2,372.9 232.1,377.0 234.3,376.9"/><polygon points="234.3,376.9 232.1,377.0 231.0,381.1 233.2,380.9"/><polygon points="233.2,380.9 231.0,381.1 229.9,385.1 232.1,385.0"/><polygon points="234.3,368.9 232.0,368.9 230.9,373.0 233.2,372.9"/><polygon points="233.2,372.9 230.9,373.0 229.8,377.1 232.1,377.0"/><polygon points="232.1,377.0 229.8,377.1 228.8,381.1 231.0,381.1"/><polygon points="231.0,381.1 228.8,381.1 227.7,385.2 229.9,385.1"/><polygon points="168.6,339.2 168.1,337.8 167.0,341.9 167.5,343.2"/><polygon points="167.5,343.2 167.0,341.9 165.9,346.0 166.4,347.3"/><polygon points="166.4,347.3 165.9,346.0 164.8,350.0 165.3,351.4"/><polygon points="165.3,351.4 164.8,350.0 163.8,354.1 164.2,355.4"/><polygon points="168.1,337.8 167.7,336.5 166.7,340.6 167.0,341.9"/><polygon points="167.0,341.9 166.7,340.6 165.6,344.6 165.9,346.0"/><polygon points="165.9,346.0 165.6,344.6 164.5,348.7 164.8,350.0"/><polygon points="164.8,350.0 164.5,348.7 163.4,352.8 163.8,354.1"/><polygon points="167.7,336.5 167.5,335.2 166.4,339.2 166.7,340.6"/><polygon points="166.7,340.6 166.4,339.2 165.3,343.3 165.6,344.6"/><polygon points="165.6,344.6 165.3,343.3 164.3,347.4 164.5,348.7"/><polygon points="164.5,348.7 164.3,347.4 163.2,351.4 163.4,352.8"/><polygon points="167.5,335.2 167.4,333.9 166.3,337.9 166.4,339.2"/><polygon points="166.4,339.2 166.3,337.9 165.2,342.0 165.3,343.3"/><polygon points="165.3,343.3 165.2,342.0 164.2,346.1 164.3,347.4"/><polygon points="164.3,347.4 164.2,346.1 163.1,350.1 163.2,351.4"/><polygon points="167.4,333.9 167.4,332.6 166.3,336.7 166.3,337.9"/><polygon points="166.3,337.9 166.3,336.7 165.3,340.7 165.2,342.0"/><polygon points="165.2,342.0 165.3,340.7 164.2,344.8 164.2,346.1"/><polygon points="164.2,346.1 164.2,344.8 163.1,348.9 163.1,350.1"/><polygon points="167.4,332.6 167.6,331.4 166.5,335.4 166.3,336.7"/><polygon points="166.3,336.7 166.5,335.4 165.4,339.5 165.3,340.7"/><polygon points="165.3,340.7 165.4,339.5 164.3,343.6 164.2,344.8"/><polygon points="164.2,344.8 164.3,343.6 163.3,347.6 163.1,348.9"/><polygon points="167.6,331.4 167.9,330.2 166.8,334.2 166.5,335.4"/><polygon points="166.5,335.4 166.8,334.2 165.7,338.3 165.4,339.5"/><polygon points="165.4,339.5 165.7,338.3 164.6,342.4 164.3,343.6"/><polygon points="164.3,343.6 164.6,342.4 163.5,346.4 163.3,347.6"/></g>
<g fill="#2a2a2a" stroke="#2a2a2a"><polygon points="197.7,337.2 196.7,339.5 201.2,341.2 202.1,338.9"/><polygon points="202.1,338.9 201.2,341.2 205.6,343.0 206.5,340.6"/><polygon points="206.5,340.6 205.6,343.0 210.0,344.7 211.0,342.4"/><polygon points="211.0,342.4 210.0,344.7 214.4,346.4 215.4,344.1"/><polygon points="196.7,339.5 195.8,341.9 200.2,343.6 201.2,341.2"/><polygon points="201.2,341.2 200.2,343.6 204.6,345.3 205.6,343.0"/><polygon points="205.6,343.0 204.6,345.3 209.0,347.0 210.0,344.7"/><polygon points="210.0,344.7 209.0,347.0 213.5,348.7 214.4,346.4"/><polygon points="195.8,341.9 194.9,344.2 199.3,345.9 200.2,343.6"/><polygon points="200.2,343.6 199.3,345.9 203.7,347.7 204.6,345.3"/><polygon points="204.6,345.3 203.7,347.7 208.1,349.4 209.0,347.0"/><polygon points="209.0,347.0 208.1,349.4 212.5,351.1 213.5,348.7"/><polygon points="194.9,344.2 194.0,346.6 198.4,348.3 199.3,345.9"/><polygon points="199.3,345.9 198.4,348.3 202.8,350.0 203.7,347.7"/><polygon points="203.7,347.7 202.8,350.0 207.2,351.7 208.1,349.4"/><polygon points="208.1,349.4 207.2,351.7 211.6,353.4 212.5,351.1"/><polygon points="194.0,346.6 193.1,348.9 197.5,350.7 198.4,348.3"/><polygon points="198.4,348.3 197.5,350.7 201.9,352.4 202.8,350.0"/><polygon points="202.8,350.0 201.9,352.4 206.3,354.1 207.2,351.7"/><polygon points="207.2,351.7 206.3,354.1 210.8,355.8 211.6,353.4"/><polygon points="193.1,348.9 192.2,351.3 196.7,353.0 197.5,350.7"/><polygon points="197.5,350.7 196.7,353.0 201.1,354.7 201.9,352.4"/><polygon points="201.9,352.4 201.1,354.7 205.5,356.5 206.3,354.1"/><polygon points="206.3,354.1 205.5,356.5 209.9,358.2 210.8,355.8"/><polygon points="192.2,351.3 191.4,353.7 195.8,355.4 196.7,353.0"/><polygon points="196.7,353.0 195.8,355.4 200.3,357.1 201.1,354.7"/><polygon points="201.1,354.7 200.3,357.1 204.7,358.8 205.5,356.5"/><polygon points="205.5,356.5 204.7,358.8 209.1,360.5 209.9,358.2"/><polygon points="191.4,353.7 190.6,356.0 195.0,357.7 195.8,355.4"/><polygon points="195.8,355.4 195.0,357.7 199.5,359.4 200.3,357.1"/><polygon points="200.3,357.1 199.5,359.4 203.9,361.1 204.7,358.8"/><polygon points="204.7,358.8 203.9,361.1 208.3,362.9 209.1,360.5"/><polygon points="190.6,356.0 189.9,358.3 194.3,360.0 195.0,357.7"/><polygon points="195.0,357.7 194.3,360.0 198.7,361.7 199.5,359.4"/><polygon points="199.5,359.4 198.7,361.7 203.1,363.4 203.9,361.1"/><polygon points="203.9,361.1 203.1,363.4 207.6,365.2 208.3,362.9"/><polygon points="189.9,358.3 189.2,360.6 193.6,362.3 194.3,360.0"/><polygon points="194.3,360.0 193.6,362.3 198.0,364.0 198.7,361.7"/><polygon points="198.7,361.7 198.0,364.0 202.4,365.7 203.1,363.4"/><polygon points="203.1,363.4 202.4,365.7 206.8,367.4 207.6,365.2"/><polygon points="189.2,360.6 188.5,362.8 192.9,364.5 193.6,362.3"/><polygon points="193.6,362.3 192.9,364.5 197.3,366.3 198.0,364.0"/><polygon points="198.0,364.0 197.3,366.3 201.8,368.0 202.4,365.7"/><polygon points="202.4,365.7 201.8,368.0 206.2,369.7 206.8,367.4"/><polygon points="188.5,362.8 187.9,365.0 192.3,366.7 192.9,364.5"/><polygon points="192.9,364.5 192.3,366.7 196.7,368.5 197.3,366.3"/><polygon points="197.3,366.3 196.7,368.5 201.1,370.2 201.8,368.0"/><polygon points="201.8,368.0 201.1,370.2 205.5,371.9 206.2,369.7"/><polygon points="187.9,365.0 187.3,367.2 191.7,368.9 192.3,366.7"/><polygon points="192.3,366.7 191.7,368.9 196.1,370.6 196.7,368.5"/><polygon points="196.7,368.5 196.1,370.6 200.5,372.3 201.1,370.2"/><polygon points="201.1,370.2 200.5,372.3 205.0,374.0 205.5,371.9"/><polygon points="187.3,367.2 186.7,369.3 191.1,371.0 191.7,368.9"/><polygon points="191.7,368.9 191.1,371.0 195.6,372.7 196.1,370.6"/><polygon points="196.1,370.6 195.6,372.7 200.0,374.4 200.5,372.3"/><polygon points="200.5,372.3 200.0,374.4 204.4,376.1 205.0,374.0"/><polygon points="186.7,369.3 186.2,371.3 190.6,373.0 191.1,371.0"/><polygon points="191.1,371.0 190.6,373.0 195.1,374.8 195.6,372.7"/><polygon points="195.6,372.7 195.1,374.8 199.5,376.5 200.0,374.4"/><polygon points="200.0,374.4 199.5,376.5 203.9,378.2 204.4,376.1"/><polygon points="186.2,371.3 185.8,373.3 190.2,375.0 190.6,373.0"/><polygon points="190.6,373.0 190.2,375.0 194.6,376.7 195.1,374.8"/><polygon points="195.1,374.8 194.6,376.7 199.0,378.4 199.5,376.5"/><polygon points="199.5,376.5 199.0,378.4 203.5,380.2 203.9,378.2"/><polygon points="185.8,373.3 185.4,375.2 189.8,376.9 190.2,375.0"/><polygon points="190.2,375.0 189.8,376.9 194.2,378.6 194.6,376.7"/><polygon points="194.6,376.7 194.2,378.6 198.6,380.4 199.0,378.4"/><polygon points="199.0,378.4 198.6,380.4 203.1,382.1 203.5,380.2"/><polygon points="185.4,375.2 185.0,377.0 189.4,378.8 189.8,376.9"/><polygon points="189.8,376.9 189.4,378.8 193.9,380.5 194.2,378.6"/><polygon points="194.2,378.6 193.9,380.5 198.3,382.2 198.6,380.4"/><polygon points="198.6,380.4 198.3,382.2 202.7,383.9 203.1,382.1"/><polygon points="185.0,377.0 184.7,378.8 189.1,380.5 189.4,378.8"/><polygon points="189.4,378.8 189.1,380.5 193.6,382.2 193.9,380.5"/><polygon points="193.9,380.5 193.6,382.2 198.0,383.9 198.3,382.2"/><polygon points="198.3,382.2 198.0,383.9 202.4,385.7 202.7,383.9"/><polygon points="184.7,378.8 184.5,380.5 188.9,382.2 189.1,380.5"/><polygon points="189.1,380.5 188.9,382.2 193.3,383.9 193.6,382.2"/><polygon points="193.6,382.2 193.3,383.9 197.7,385.6 198.0,383.9"/><polygon points="198.0,383.9 197.7,385.6 202.1,387.3 202.4,385.7"/><polygon points="184.5,380.5 184.3,382.0 188.7,383.7 188.9,382.2"/><polygon points="188.9,382.2 188.7,383.7 193.1,385.5 193.3,383.9"/><polygon points="193.3,383.9 193.1,385.5 197.5,387.2 197.7,385.6"/><polygon points="197.7,385.6 197.5,387.2 201.9,388.9 202.1,387.3"/><polygon points="184.3,382.0 184.1,383.5 188.5,385.2 188.7,383.7"/><polygon points="188.7,383.7 188.5,385.2 193.0,386.9 193.1,385.5"/><polygon points="193.1,385.5 193.0,386.9 197.4,388.7 197.5,387.2"/><polygon points="197.5,387.2 197.4,388.7 201.8,390.4 201.9,388.9"/><polygon points="184.1,383.5 184.0,384.9 188.4,386.6 188.5,385.2"/><polygon points="188.5,385.2 188.4,386.6 192.9,388.3 193.0,386.9"/><polygon points="193.0,386.9 192.9,388.3 197.3,390.0 197.4,388.7"/><polygon points="197.4,388.7 197.3,390.0 201.7,391.8 201.8,390.4"/><polygon points="184.0,384.9 184.0,386.2 188.4,387.9 188.4,386.6"/><polygon points="188.4,386.6 188.4,387.9 192.8,389.6 192.9,388.3"/><polygon points="192.9,388.3 192.8,389.6 197.2,391.3 197.3,390.0"/><polygon points="197.3,390.0 197.2,391.3 201.7,393.0 201.7,391.8"/><polygon points="184.0,386.2 184.0,387.3 188.4,389.1 188.4,387.9"/><polygon points="188.4,387.9 188.4,389.1 192.8,390.8 192.8,389.6"/><polygon points="192.8,389.6 192.8,390.8 197.3,392.5 197.2,391.3"/><polygon points="197.2,391.3 197.3,392.5 201.7,394.2 201.7,393.0"/><polygon points="184.0,387.3 184.1,388.4 188.5,390.1 188.4,389.1"/><polygon points="188.4,389.1 188.5,390.1 192.9,391.8 192.8,390.8"/><polygon points="192.8,390.8 192.9,391.8 197.3,393.6 197.3,392.5"/><polygon points="197.3,392.5 197.3,393.6 201.7,395.3 201.7,394.2"/><polygon points="184.1,388.4 184.2,389.4 188.6,391.1 188.5,390.1"/><polygon points="188.5,390.1 188.6,391.1 193.0,392.8 192.9,391.8"/><polygon points="192.9,391.8 193.0,392.8 197.4,394.5 197.3,393.6"/><polygon points="197.3,393.6 197.4,394.5 201.9,396.2 201.7,395.3"/><polygon points="184.2,389.4 184.4,390.2 188.8,391.9 188.6,391.1"/><polygon points="188.6,391.1 188.8,391.9 193.2,393.6 193.0,392.8"/><polygon points="193.0,392.8 193.2,393.6 197.6,395.3 197.4,394.5"/><polygon points="197.4,394.5 197.6,395.3 202.0,397.1 201.9,396.2"/><polygon points="184.4,390.2 184.6,390.9 189.0,392.6 188.8,391.9"/><polygon points="188.8,391.9 189.0,392.6 193.4,394.3 193.2,393.6"/><polygon points="193.2,393.6 193.4,394.3 197.8,396.1 197.6,395.3"/><polygon points="197.6,395.3 197.8,396.1 202.3,397.8 202.0,397.1"/><polygon points="184.6,390.9 184.9,391.5 189.3,393.2 189.0,392.6"/><polygon points="189.0,392.6 189.3,393.2 193.7,394.9 193.4,394.3"/><polygon points="193.4,394.3 193.7,394.9 198.1,396.7 197.8,396.1"/><polygon points="197.8,396.1 198.1,396.7 202.5,398.4 202.3,397.8"/><polygon points="184.9,391.5 185.2,392.0 189.6,393.7 189.3,393.2"/><polygon points="189.3,393.2 189.6,393.7 194.0,395.4 193.7,394.9"/><polygon points="193.7,394.9 194.0,395.4 198.4,397.1 198.1,396.7"/><polygon points="198.1,396.7 198.4,397.1 202.9,398.9 202.5,398.4"/><polygon points="185.2,392.0 185.6,392.4 190.0,394.1 189.6,393.7"/><polygon points="189.6,393.7 190.0,394.1 194.4,395.8 194.0,395.4"/><polygon points="194.0,395.4 194.4,395.8 198.8,397.5 198.4,397.1"/><polygon points="198.4,397.1 198.8,397.5 203.2,399.2 202.9,398.9"/><polygon points="185.6,392.4 186.0,392.6 190.4,394.3 190.0,394.1"/><polygon points="190.0,394.1 190.4,394.3 194.8,396.0 194.4,395.8"/><polygon points="194.4,395.8 194.8,396.0 199.2,397.7 198.8,397.5"/><polygon points="198.8,397.5 199.2,397.7 203.7,399.5 203.2,399.2"/><polygon points="232.0,368.9 229.7,368.9 228.6,373.0 230.9,373.0"/><polygon points="230.9,373.0 228.6,373.0 227.5,377.0 229.8,377.1"/><polygon points="229.8,377.1 227.5,377.0 226.5,381.1 228.8,381.1"/><polygon points="228.8,381.1 226.5,381.1 225.4,385.2 227.7,385.2"/><polygon points="229.7,368.9 227.3,368.8 226.3,372.9 228.6,373.0"/><polygon points="228.6,373.0 226.3,372.9 225.2,377.0 227.5,377.0"/><polygon points="227.5,377.0 225.2,377.0 224.1,381.0 226.5,381.1"/><polygon points="226.5,381.1 224.1,381.0 223.0,385.1 225.4,385.2"/><polygon points="227.3,368.8 225.0,368.7 223.9,372.7 226.3,372.9"/><polygon points="226.3,372.9 223.9,372.7 222.8,376.8 225.2,377.0"/><polygon points="225.2,377.0 222.8,376.8 221.7,380.9 224.1,381.0"/><polygon points="224.1,381.0 221.7,380.9 220.6,384.9 223.0,385.1"/><polygon points="225.0,368.7 222.5,368.4 221.5,372.5 223.9,372.7"/><polygon points="223.9,372.7 221.5,372.5 220.4,376.6 222.8,376.8"/><polygon points="222.8,376.8 220.4,376.6 219.3,380.6 221.7,380.9"/><polygon points="221.7,380.9 219.3,380.6 218.2,384.7 220.6,384.9"/><polygon points="222.5,368.4 220.1,368.1 219.0,372.2 221.5,372.5"/><polygon points="221.5,372.5 219.0,372.2 217.9,376.3 220.4,376.6"/><polygon points="220.4,376.6 217.9,376.3 216.9,380.3 219.3,380.6"/><polygon points="219.3,380.6 216.9,380.3 215.8,384.4 218.2,384.7"/><polygon points="220.1,368.1 217.7,367.8 216.6,371.8 219.0,372.2"/><polygon points="219.0,372.2 216.6,371.8 215.5,375.9 217.9,376.3"/><polygon points="217.9,376.3 215.5,375.9 214.4,380.0 216.9,380.3"/><polygon points="216.9,380.3 214.4,380.0 213.3,384.0 215.8,384.4"/><polygon points="217.7,367.8 215.2,367.3 214.1,371.4 216.6,371.8"/><polygon points="216.6,371.8 214.1,371.4 213.0,375.5 215.5,375.9"/><polygon points="215.5,375.9 213.0,375.5 211.9,379.5 214.4,380.0"/><polygon points="214.4,380.0 211.9,379.5 210.9,383.6 213.3,384.0"/><polygon points="215.2,367.3 212.7,366.8 211.6,370.9 214.1,371.4"/><polygon points="214.1,371.4 211.6,370.9 210.6,375.0 213.0,375.5"/><polygon points="213.0,375.5 210.6,375.0 209.5,379.0 211.9,379.5"/><polygon points="211.9,379.5 209.5,379.0 208.4,383.1 210.9,383.6"/><polygon points="212.7,366.8 210.3,366.3 209.2,370.3 211.6,370.9"/><polygon points="211.6,370.9 209.2,370.3 208.1,374.4 210.6,375.0"/><polygon points="210.6,375.0 208.1,374.4 207.0,378.5 209.5,379.0"/><polygon points="209.5,379.0 207.0,378.5 205.9,382.5 208.4,383.1"/><polygon points="210.3,366.3 207.8,365.6 206.7,369.7 209.2,370.3"/><polygon points="209.2,370.3 206.7,369.7 205.7,373.8 208.1,374.4"/><polygon points="208.1,374.4 205.7,373.8 204.6,377.8 207.0,378.5"/><polygon points="207.0,378.5 204.6,377.8 203.5,381.9 205.9,382.5"/><polygon points="207.8,365.6 205.4,364.9 204.3,369.0 206.7,369.7"/><polygon points="206.7,369.7 204.3,369.0 203.2,373.1 205.7,373.8"/><polygon points="205.7,373.8 203.2,373.1 202.1,377.1 204.6,377.8"/><polygon points="204.6,377.8 202.1,377.1 201.1,381.2 203.5,381.9"/><polygon points="205.4,364.9 203.0,364.2 201.9,368.2 204.3,369.0"/><polygon points="204.3,369.0 201.9,368.2 200.8,372.3 203.2,373.1"/><polygon points="203.2,373.1 200.8,372.3 199.7,376.4 202.1,377.1"/><polygon points="202.1,377.1 199.7,376.4 198.7,380.4 201.1,381.2"/><polygon points="203.0,364.2 200.6,363.4 199.5,367.4 201.9,368.2"/><polygon points="201.9,368.2 199.5,367.4 198.4,371.5 200.8,372.3"/><polygon points="200.8,372.3 198.4,371.5 197.4,375.6 199.7,376.4"/><polygon points="199.7,376.4 197.4,375.6 196.3,379.6 198.7,380.4"/><polygon points="200.6,363.4 198.3,362.5 197.2,366.5 199.5,367.4"/><polygon points="199.5,367.4 197.2,366.5 196.1,370.6 198.4,371.5"/><polygon points="198.4,371.5 196.1,370.6 195.0,374.7 197.4,375.6"/><polygon points="197.4,375.6 195.0,374.7 193.9,378.7 196.3,379.6"/><polygon points="198.3,362.5 196.0,361.6 194.9,365.6 197.2,366.5"/><polygon points="197.2,366.5 194.9,365.6 193.8,369.7 196.1,370.6"/><polygon points="196.1,370.6 193.8,369.7 192.7,373.8 195.0,374.7"/><polygon points="195.0,374.7 192.7,373.8 191.7,377.8 193.9,378.7"/><polygon points="196.0,361.6 193.7,360.6 192.7,364.6 194.9,365.6"/><polygon points="194.9,365.6 192.7,364.6 191.6,368.7 193.8,369.7"/><polygon points="193.8,369.7 191.6,368.7 190.5,372.8 192.7,373.8"/><polygon points="192.7,373.8 190.5,372.8 189.4,376.8 191.7,377.8"/><polygon points="193.7,360.6 191.6,359.6 190.5,363.6 192.7,364.6"/><polygon points="192.7,364.6 190.5,363.6 189.4,367.7 191.6,368.7"/><polygon points="191.6,368.7 189.4,367.7 188.3,371.8 190.5,372.8"/><polygon points="190.5,372.8 188.3,371.8 187.2,375.8 189.4,376.8"/><polygon points="191.6,359.6 189.4,358.5 188.4,362.6 190.5,363.6"/><polygon points="190.5,363.6 188.4,362.6 187.3,366.6 189.4,367.7"/><polygon points="189.4,367.7 187.3,366.6 186.2,370.7 188.3,371.8"/><polygon points="188.3,371.8 186.2,370.7 185.1,374.8 187.2,375.8"/><polygon points="189.4,358.5 187.4,357.4 186.3,361.4 188.4,362.6"/><polygon points="188.4,362.6 186.3,361.4 185.2,365.5 187.3,366.6"/><polygon points="187.3,366.6 185.2,365.5 184.1,369.6 186.2,370.7"/><polygon points="186.2,370.7 184.1,369.6 183.1,373.6 185.1,374.8"/><polygon points="187.4,357.4 185.4,356.2 184.3,360.3 186.3,361.4"/><polygon points="186.3,361.4 184.3,360.3 183.2,364.4 185.2,365.5"/><polygon points="185.2,365.5 183.2,364.4 182.2,368.4 184.1,369.6"/><polygon points="184.1,369.6 182.2,368.4 181.1,372.5 183.1,373.6"/><polygon points="185.4,356.2 183.5,355.0 182.4,359.1 184.3,360.3"/><polygon points="184.3,360.3 182.4,359.1 181.3,363.2 183.2,364.4"/><polygon points="183.2,364.4 181.3,363.2 180.3,367.2 182.2,368.4"/><polygon points="182.2,368.4 180.3,367.2 179.2,371.3 181.1,372.5"/><polygon points="183.5,355.0 181.7,353.8 180.6,357.9 182.4,359.1"/><polygon points="182.4,359.1 180.6,357.9 179.5,361.9 181.3,363.2"/><polygon points="181.3,363.2 179.5,361.9 178.5,366.0 180.3,367.2"/><polygon points="180.3,367.2 178.5,366.0 177.4,370.1 179.2,371.3"/><polygon points="181.7,353.8 180.0,352.6 178.9,356.6 180.6,357.9"/><polygon points="180.6,357.9 178.9,356.6 177.8,360.7 179.5,361.9"/><polygon points="179.5,361.9 177.8,360.7 176.7,364.8 178.5,366.0"/><polygon points="178.5,366.0 176.7,364.8 175.6,368.8 177.4,370.1"/><polygon points="180.0,352.6 178.3,351.3 177.3,355.3 178.9,356.6"/><polygon points="178.9,356.6 177.3,355.3 176.2,359.4 177.8,360.7"/><polygon points="177.8,360.7 176.2,359.4 175.1,363.5 176.7,364.8"/><polygon points="176.7,364.8 175.1,363.5 174.0,367.5 175.6,368.8"/><polygon points="178.3,351.3 176.8,350.0 175.7,354.0 177.3,355.3"/><polygon points="177.3,355.3 175.7,354.0 174.7,358.1 176.2,359.4"/><polygon points="176.2,359.4 174.7,358.1 173.6,362.2 175.1,363.5"/><polygon points="175.1,363.5 173.6,362.2 172.5,366.2 174.0,367.5"/><polygon points="176.8,350.0 175.4,348.7 174.3,352.7 175.7,354.0"/><polygon points="175.7,354.0 174.3,352.7 173.2,356.8 174.7,358.1"/><polygon points="174.7,358.1 173.2,356.8 172.1,360.9 173.6,362.2"/><polygon points="173.6,362.2 172.1,360.9 171.1,364.9 172.5,366.2"/><polygon points="175.4,348.7 174.1,347.3 173.0,351.4 174.3,352.7"/><polygon points="174.3,352.7 173.0,351.4 171.9,355.4 173.2,356.8"/><polygon points="173.2,356.8 171.9,355.4 170.8,359.5 172.1,360.9"/><polygon points="172.1,360.9 170.8,359.5 169.7,363.6 171.1,364.9"/><polygon points="174.1,347.3 172.9,346.0 171.8,350.0 173.0,351.4"/><polygon points="173.0,351.4 171.8,350.0 170.7,354.1 171.9,355.4"/><polygon points="171.9,355.4 170.7,354.1 169.6,358.2 170.8,359.5"/><polygon points="170.8,359.5 169.6,358.2 168.5,362.2 169.7,363.6"/><polygon points="172.9,346.0 171.8,344.6 170.7,348.7 171.8,350.0"/><polygon points="171.8,350.0 170.7,348.7 169.6,352.7 170.7,354.1"/><polygon points="170.7,354.1 169.6,352.7 168.5,356.8 169.6,358.2"/><polygon points="169.6,358.2 168.5,356.8 167.4,360.9 168.5,362.2"/><polygon points="171.8,344.6 170.8,343.2 169.7,347.3 170.7,348.7"/><polygon points="170.7,348.7 169.7,347.3 168.6,351.4 169.6,352.7"/><polygon points="169.6,352.7 168.6,351.4 167.5,355.4 168.5,356.8"/><polygon points="168.5,356.8 167.5,355.4 166.5,359.5 167.4,360.9"/><polygon points="170.8,343.2 169.9,341.9 168.8,345.9 169.7,347.3"/><polygon points="169.7,347.3 168.8,345.9 167.8,350.0 168.6,351.4"/><polygon points="168.6,351.4 167.8,350.0 166.7,354.1 167.5,355.4"/><polygon points="167.5,355.4 166.7,354.1 165.6,358.1 166.5,359.5"/><polygon points="169.9,341.9 169.2,340.5 168.1,344.6 168.8,345.9"/><polygon points="168.8,345.9 168.1,344.6 167.0,348.7 167.8,350.0"/><polygon points="167.8,350.0 167.0,348.7 165.9,352.7 166.7,354.1"/><polygon points="166.7,354.1 165.9,352.7 164.9,356.8 165.6,358.1"/><polygon points="169.2,340.5 168.6,339.2 167.5,343.2 168.1,344.6"/><polygon points="168.1,344.6 167.5,343.2 166.4,347.3 167.0,348.7"/><polygon points="167.0,348.7 166.4,347.3 165.3,351.4 165.9,352.7"/><polygon points="165.9,352.7 165.3,351.4 164.2,355.4 164.9,356.8"/></g>
<g fill="#8a8a8a" stroke="#8a8a8a"><polygon points="192.6,388.2 193.5,387.2 197.9,388.9 197.0,390.0"/><polygon points="197.0,390.0 197.9,388.9 202.3,390.6 201.5,391.7"/><polygon points="201.5,391.7 202.3,390.6 206.7,392.3 205.9,393.4"/><polygon points="205.9,393.4 206.7,392.3 211.2,394.0 210.3,395.1"/><polygon points="191.0,390.1 191.8,389.2 196.2,390.9 195.4,391.8"/><polygon points="204.3,395.2 205.1,394.4 209.5,396.1 208.7,396.9"/><polygon points="191.8,389.2 192.6,388.2 197.0,390.0 196.2,390.9"/><polygon points="196.2,390.9 197.0,390.0 201.5,391.7 200.6,392.6"/><polygon points="200.6,392.6 201.5,391.7 205.9,393.4 205.1,394.4"/><polygon points="205.1,394.4 205.9,393.4 210.3,395.1 209.5,396.1"/></g>
<g fill="#8d8d8d" stroke="#8d8d8d"><polygon points="193.5,387.2 194.4,386.0 198.8,387.7 197.9,388.9"/><polygon points="206.7,392.3 207.6,391.1 212.1,392.8 211.2,394.0"/></g>
<g fill="#909090" stroke="#909090"><polygon points="194.4,386.0 195.3,384.7 199.7,386.4 198.8,387.7"/><polygon points="207.6,391.1 208.6,389.8 213.0,391.5 212.1,392.8"/></g>
<g fill="#ffffff" stroke="#ffffff"><polygon points="217.8,334.6 218.4,332.3 222.8,334.0 222.2,336.3"/><polygon points="231.0,339.7 231.7,337.5 236.1,339.2 235.4,341.4"/><polygon points="218.4,332.3 219.1,330.1 223.5,331.8 222.8,334.0"/><polygon points="231.7,337.5 232.3,335.3 236.7,337.0 236.1,339.2"/><polygon points="219.1,330.1 219.6,328.0 224.1,329.7 223.5,331.8"/><polygon points="223.5,331.8 224.1,329.7 228.5,331.4 227.9,333.5"/><polygon points="227.9,333.5 228.5,331.4 232.9,333.1 232.3,335.3"/><polygon points="232.3,335.3 232.9,333.1 237.3,334.8 236.7,337.0"/><polygon points="219.6,328.0 220.2,325.9 224.6,327.6 224.1,329.7"/><polygon points="224.1,329.7 224.6,327.6 229.0,329.3 228.5,331.4"/><polygon points="228.5,331.4 229.0,329.3 233.5,331.0 232.9,333.1"/><polygon points="232.9,333.1 233.5,331.0 237.9,332.7 237.3,334.8"/><polygon points="220.2,325.9 220.7,323.8 225.1,325.5 224.6,327.6"/><polygon points="233.5,331.0 234.0,329.0 238.4,330.7 237.9,332.7"/><polygon points="230.7,323.3 232.9,324.2 231.9,328.2 229.6,327.3"/><polygon points="229.6,327.3 231.9,328.2 230.8,332.3 228.5,331.4"/><polygon points="228.5,331.4 230.8,332.3 229.7,336.4 227.4,335.5"/><polygon points="227.4,335.5 229.7,336.4 228.6,340.4 226.3,339.5"/><polygon points="232.9,324.2 235.2,325.2 234.1,329.2 231.9,328.2"/><polygon points="229.7,336.4 231.9,337.4 230.9,341.4 228.6,340.4"/><polygon points="223.5,320.8 225.9,321.6 224.9,325.6 222.5,324.9"/><polygon points="220.3,333.0 222.7,333.8 221.6,337.8 219.2,337.1"/><polygon points="225.9,321.6 228.3,322.4 227.2,326.4 224.9,325.6"/><polygon points="222.7,333.8 225.1,334.6 224.0,338.6 221.6,337.8"/><polygon points="228.3,322.4 230.7,323.3 229.6,327.3 227.2,326.4"/><polygon points="227.2,326.4 229.6,327.3 228.5,331.4 226.2,330.5"/><polygon points="226.2,330.5 228.5,331.4 227.4,335.5 225.1,334.6"/><polygon points="225.1,334.6 227.4,335.5 226.3,339.5 224.0,338.6"/></g>
<g fill="#f6f6f6" stroke="#f6f6f6"><polygon points="220.7,323.8 221.1,321.8 225.6,323.6 225.1,325.5"/><polygon points="234.0,329.0 234.4,327.0 238.8,328.7 238.4,330.7"/></g>
<g fill="#878787" stroke="#878787"><polygon points="190.2,390.8 191.0,390.1 195.4,391.8 194.6,392.5"/><polygon points="203.5,396.0 204.3,395.2 208.7,396.9 207.9,397.7"/><polygon points="168.3,329.0 168.8,327.9 167.7,331.9 167.2,333.1"/><polygon points="165.0,341.2 165.6,340.1 164.5,344.1 163.9,345.3"/><polygon points="168.8,327.9 169.5,326.8 168.4,330.8 167.7,331.9"/><polygon points="165.6,340.1 166.2,339.0 165.1,343.0 164.5,344.1"/><polygon points="169.5,326.8 170.3,325.7 169.2,329.8 168.4,330.8"/><polygon points="168.4,330.8 169.2,329.8 168.1,333.8 167.3,334.9"/><polygon points="167.3,334.9 168.1,333.8 167.0,337.9 166.2,339.0"/><polygon points="166.2,339.0 167.0,337.9 165.9,342.0 165.1,343.0"/><polygon points="170.3,325.7 171.2,324.7 170.1,328.8 169.2,329.8"/><polygon points="169.2,329.8 170.1,328.8 169.0,332.8 168.1,333.8"/><polygon points="168.1,333.8 169.0,332.8 167.9,336.9 167.0,337.9"/><polygon points="167.0,337.9 167.9,336.9 166.8,341.0 165.9,342.0"/><polygon points="171.2,324.7 172.2,323.8 171.1,327.8 170.1,328.8"/><polygon points="167.9,336.9 169.0,336.0 167.9,340.0 166.8,341.0"/><polygon points="172.2,323.8 173.3,322.9 172.3,326.9 171.1,327.8"/><polygon points="169.0,336.0 170.1,335.1 169.0,339.1 167.9,340.0"/></g>
<g fill="#fcfcfc" stroke="#fcfcfc"><polygon points="235.2,325.2 237.4,326.2 236.3,330.2 234.1,329.2"/><polygon points="231.9,337.4 234.1,338.4 233.0,342.4 230.9,341.4"/></g>
<g fill="#757575" stroke="#757575"><polygon points="205.3,397.8 202.9,397.2 204.5,395.2 206.9,395.8"/><polygon points="210.1,391.9 207.8,391.3 209.4,389.3 211.8,389.9"/><polygon points="202.9,397.2 200.6,396.4 202.2,394.5 204.5,395.2"/><polygon points="207.8,391.3 205.4,390.5 207.0,388.6 209.4,389.3"/><polygon points="200.6,396.4 198.2,395.6 199.8,393.6 202.2,394.5"/><polygon points="202.2,394.5 199.8,393.6 201.5,391.7 203.8,392.5"/><polygon points="203.8,392.5 201.5,391.7 203.1,389.7 205.4,390.5"/><polygon points="205.4,390.5 203.1,389.7 204.7,387.7 207.0,388.6"/><polygon points="198.2,395.6 195.9,394.6 197.5,392.7 199.8,393.6"/><polygon points="199.8,393.6 197.5,392.7 199.2,390.7 201.5,391.7"/><polygon points="201.5,391.7 199.2,390.7 200.8,388.8 203.1,389.7"/><polygon points="203.1,389.7 200.8,388.8 202.4,386.8 204.7,387.7"/></g>
<g fill="#787878" stroke="#787878"><polygon points="195.9,394.6 193.7,393.6 195.3,391.6 197.5,392.7"/><polygon points="200.8,388.8 198.5,387.7 200.1,385.7 202.4,386.8"/><polygon points="193.7,393.6 191.4,392.4 193.1,390.4 195.3,391.6"/><polygon points="198.5,387.7 196.3,386.5 197.9,384.6 200.1,385.7"/></g>
<g fill="#727272" stroke="#727272"><polygon points="163.7,344.3 164.0,342.1 165.6,340.2 165.3,342.4"/><polygon points="168.6,338.5 168.8,336.2 170.4,334.3 170.2,336.5"/><polygon points="164.0,342.1 164.4,339.9 166.0,338.0 165.6,340.2"/><polygon points="168.8,336.2 169.2,334.0 170.8,332.1 170.4,334.3"/><polygon points="164.4,339.9 164.9,337.8 166.5,335.8 166.0,338.0"/><polygon points="166.0,338.0 166.5,335.8 168.1,333.8 167.6,336.0"/><polygon points="167.6,336.0 168.1,333.8 169.7,331.9 169.2,334.0"/><polygon points="169.2,334.0 169.7,331.9 171.3,329.9 170.8,332.1"/><polygon points="164.9,337.8 165.5,335.7 167.1,333.7 166.5,335.8"/><polygon points="166.5,335.8 167.1,333.7 168.7,331.7 168.1,333.8"/><polygon points="168.1,333.8 168.7,331.7 170.3,329.8 169.7,331.9"/><polygon points="169.7,331.9 170.3,329.8 172.0,327.8 171.3,329.9"/><polygon points="165.5,335.7 166.2,333.6 167.9,331.7 167.1,333.7"/><polygon points="170.3,329.8 171.1,327.7 172.7,325.8 172.0,327.8"/><polygon points="166.2,333.6 167.1,331.6 168.7,329.7 167.9,331.7"/><polygon points="171.1,327.7 172.0,325.7 173.6,323.8 172.7,325.8"/></g>
<g fill="#8d8d8d" stroke="#8d8d8d"><polygon points="197.9,388.9 198.8,387.7 203.2,389.4 202.3,390.6"/><polygon points="202.3,390.6 203.2,389.4 207.6,391.1 206.7,392.3"/><polygon points="174.6,322.0 176.0,321.2 174.9,325.3 173.5,326.1"/><polygon points="173.5,326.1 174.9,325.3 173.8,329.4 172.4,330.1"/><polygon points="172.4,330.1 173.8,329.4 172.7,333.4 171.4,334.2"/><polygon points="171.4,334.2 172.7,333.4 171.6,337.5 170.3,338.3"/></g>
<g fill="#909090" stroke="#909090"><polygon points="198.8,387.7 199.7,386.4 204.1,388.1 203.2,389.4"/><polygon points="203.2,389.4 204.1,388.1 208.6,389.8 207.6,391.1"/></g>
<g fill="#939393" stroke="#939393"><polygon points="195.3,384.7 196.2,383.3 200.6,385.0 199.7,386.4"/><polygon points="199.7,386.4 200.6,385.0 205.1,386.7 204.1,388.1"/><polygon points="204.1,388.1 205.1,386.7 209.5,388.4 208.6,389.8"/><polygon points="208.6,389.8 209.5,388.4 213.9,390.1 213.0,391.5"/><polygon points="176.0,321.2 177.4,320.5 176.4,324.6 174.9,325.3"/><polygon points="174.9,325.3 176.4,324.6 175.3,328.6 173.8,329.4"/><polygon points="173.8,329.4 175.3,328.6 174.2,332.7 172.7,333.4"/><polygon points="172.7,333.4 174.2,332.7 173.1,336.8 171.6,337.5"/></g>
<g fill="#999999" stroke="#999999"><polygon points="196.2,383.3 197.2,381.8 201.6,383.5 200.6,385.0"/><polygon points="200.6,385.0 201.6,383.5 206.0,385.2 205.1,386.7"/><polygon points="205.1,386.7 206.0,385.2 210.4,386.9 209.5,388.4"/><polygon points="209.5,388.4 210.4,386.9 214.9,388.6 213.9,390.1"/><polygon points="177.4,320.5 179.0,319.8 177.9,323.9 176.4,324.6"/><polygon points="176.4,324.6 177.9,323.9 176.8,328.0 175.3,328.6"/><polygon points="175.3,328.6 176.8,328.0 175.8,332.0 174.2,332.7"/><polygon points="174.2,332.7 175.8,332.0 174.7,336.1 173.1,336.8"/></g>
<g fill="#a2a2a2" stroke="#a2a2a2"><polygon points="197.2,381.8 198.2,380.2 202.6,381.9 201.6,383.5"/><polygon points="201.6,383.5 202.6,381.9 207.0,383.6 206.0,385.2"/><polygon points="206.0,385.2 207.0,383.6 211.4,385.3 210.4,386.9"/><polygon points="210.4,386.9 211.4,385.3 215.8,387.0 214.9,388.6"/><polygon points="261.3,354.4 261.1,355.6 260.0,359.6 260.3,358.4"/><polygon points="260.3,358.4 260.0,359.6 258.9,363.7 259.2,362.5"/><polygon points="259.2,362.5 258.9,363.7 257.8,367.8 258.1,366.6"/><polygon points="258.1,366.6 257.8,367.8 256.7,371.8 257.0,370.6"/><polygon points="180.7,319.2 182.4,318.7 181.4,322.7 179.6,323.3"/><polygon points="179.6,323.3 181.4,322.7 180.3,326.8 178.5,327.4"/><polygon points="178.5,327.4 180.3,326.8 179.2,330.9 177.4,331.4"/><polygon points="177.4,331.4 179.2,330.9 178.1,334.9 176.3,335.5"/></g>
<g fill="#a8a8a8" stroke="#a8a8a8"><polygon points="198.2,380.2 199.1,378.5 203.6,380.2 202.6,381.9"/><polygon points="202.6,381.9 203.6,380.2 208.0,381.9 207.0,383.6"/><polygon points="207.0,383.6 208.0,381.9 212.4,383.7 211.4,385.3"/><polygon points="211.4,385.3 212.4,383.7 216.8,385.4 215.8,387.0"/><polygon points="261.5,351.9 261.5,353.1 260.4,357.2 260.4,355.9"/><polygon points="260.4,355.9 260.4,357.2 259.3,361.3 259.4,360.0"/><polygon points="259.4,360.0 259.3,361.3 258.3,365.3 258.3,364.1"/><polygon points="258.3,364.1 258.3,365.3 257.2,369.4 257.2,368.1"/><polygon points="182.4,318.7 184.3,318.2 183.2,322.3 181.4,322.7"/><polygon points="181.4,322.7 183.2,322.3 182.1,326.3 180.3,326.8"/><polygon points="180.3,326.8 182.1,326.3 181.0,330.4 179.2,330.9"/><polygon points="179.2,330.9 181.0,330.4 180.0,334.5 178.1,334.9"/></g>
<g fill="#b1b1b1" stroke="#b1b1b1"><polygon points="199.1,378.5 200.1,376.7 204.6,378.5 203.6,380.2"/><polygon points="203.6,380.2 204.6,378.5 209.0,380.2 208.0,381.9"/><polygon points="208.0,381.9 209.0,380.2 213.4,381.9 212.4,383.7"/><polygon points="212.4,383.7 213.4,381.9 217.8,383.6 216.8,385.4"/><polygon points="261.2,349.2 261.4,350.6 260.3,354.6 260.1,353.3"/><polygon points="260.1,353.3 260.3,354.6 259.3,358.7 259.0,357.4"/><polygon points="259.0,357.4 259.3,358.7 258.2,362.8 257.9,361.4"/><polygon points="257.9,361.4 258.2,362.8 257.1,366.8 256.9,365.5"/></g>
<g fill="#bababa" stroke="#bababa"><polygon points="200.1,376.7 201.2,374.9 205.6,376.6 204.6,378.5"/><polygon points="204.6,378.5 205.6,376.6 210.0,378.3 209.0,380.2"/><polygon points="209.0,380.2 210.0,378.3 214.4,380.0 213.4,381.9"/><polygon points="213.4,381.9 214.4,380.0 218.8,381.8 217.8,383.6"/><polygon points="221.4,302.8 220.9,302.5 225.4,304.3 225.8,304.5"/><polygon points="225.8,304.5 225.4,304.3 229.8,306.0 230.2,306.2"/><polygon points="230.2,306.2 229.8,306.0 234.2,307.7 234.6,307.9"/><polygon points="234.6,307.9 234.2,307.7 238.6,309.4 239.0,309.6"/><polygon points="259.7,345.2 260.4,346.6 259.3,350.6 258.7,349.3"/><polygon points="258.7,349.3 259.3,350.6 258.2,354.7 257.6,353.3"/><polygon points="257.6,353.3 258.2,354.7 257.1,358.8 256.5,357.4"/><polygon points="256.5,357.4 257.1,358.8 256.0,362.8 255.4,361.5"/><polygon points="188.2,317.5 190.3,317.2 189.2,321.3 187.1,321.5"/><polygon points="187.1,321.5 189.2,321.3 188.1,325.3 186.1,325.6"/><polygon points="186.1,325.6 188.1,325.3 187.1,329.4 185.0,329.7"/><polygon points="185.0,329.7 187.1,329.4 186.0,333.5 183.9,333.7"/></g>
<g fill="#c3c3c3" stroke="#c3c3c3"><polygon points="201.2,374.9 202.2,373.0 206.6,374.7 205.6,376.6"/><polygon points="205.6,376.6 206.6,374.7 211.0,376.4 210.0,378.3"/><polygon points="210.0,378.3 211.0,376.4 215.4,378.1 214.4,380.0"/><polygon points="214.4,380.0 215.4,378.1 219.9,379.8 218.8,381.8"/><polygon points="222.6,304.9 222.3,304.2 226.8,305.9 227.0,306.7"/><polygon points="227.0,306.7 226.8,305.9 231.2,307.7 231.4,308.4"/><polygon points="231.4,308.4 231.2,307.7 235.6,309.4 235.8,310.1"/><polygon points="235.8,310.1 235.6,309.4 240.0,311.1 240.2,311.8"/><polygon points="257.2,341.1 258.1,342.5 257.1,346.6 256.1,345.2"/><polygon points="256.1,345.2 257.1,346.6 256.0,350.6 255.0,349.3"/><polygon points="255.0,349.3 256.0,350.6 254.9,354.7 253.9,353.3"/><polygon points="253.9,353.3 254.9,354.7 253.8,358.8 252.8,357.4"/></g>
<g fill="#cccccc" stroke="#cccccc"><polygon points="202.2,373.0 203.2,371.0 207.6,372.7 206.6,374.7"/><polygon points="206.6,374.7 207.6,372.7 212.0,374.4 211.0,376.4"/><polygon points="211.0,376.4 212.0,374.4 216.4,376.1 215.4,378.1"/><polygon points="215.4,378.1 216.4,376.1 220.9,377.9 219.9,379.8"/><polygon points="222.9,307.8 222.9,306.7 227.3,308.4 227.3,309.5"/><polygon points="227.3,309.5 227.3,308.4 231.7,310.2 231.8,311.2"/><polygon points="231.8,311.2 231.7,310.2 236.1,311.9 236.2,312.9"/><polygon points="236.2,312.9 236.1,311.9 240.5,313.6 240.6,314.7"/><polygon points="254.9,338.4 256.1,339.8 255.0,343.8 253.8,342.5"/><polygon points="253.8,342.5 255.0,343.8 253.9,347.9 252.7,346.6"/><polygon points="252.7,346.6 253.9,347.9 252.8,352.0 251.6,350.6"/><polygon points="251.6,350.6 252.8,352.0 251.7,356.0 250.5,354.7"/><polygon points="194.7,316.9 196.9,316.8 195.8,320.9 193.6,320.9"/><polygon points="193.6,320.9 195.8,320.9 194.8,324.9 192.5,325.0"/><polygon points="192.5,325.0 194.8,324.9 193.7,329.0 191.4,329.1"/><polygon points="191.4,329.1 193.7,329.0 192.6,333.1 190.3,333.1"/></g>
<g fill="#d5d5d5" stroke="#d5d5d5"><polygon points="203.2,371.0 204.2,368.9 208.6,370.7 207.6,372.7"/><polygon points="207.6,372.7 208.6,370.7 213.0,372.4 212.0,374.4"/><polygon points="212.0,374.4 213.0,372.4 217.5,374.1 216.4,376.1"/><polygon points="216.4,376.1 217.5,374.1 221.9,375.8 220.9,377.9"/><polygon points="222.8,311.6 222.9,310.2 227.3,312.0 227.2,313.3"/><polygon points="227.2,313.3 227.3,312.0 231.7,313.7 231.6,315.1"/><polygon points="231.6,315.1 231.7,313.7 236.2,315.4 236.1,316.8"/><polygon points="236.1,316.8 236.2,315.4 240.6,317.1 240.5,318.5"/></g>
<g fill="#dbdbdb" stroke="#dbdbdb"><polygon points="204.2,368.9 205.2,366.8 209.6,368.5 208.6,370.7"/><polygon points="208.6,370.7 209.6,368.5 214.1,370.3 213.0,372.4"/><polygon points="213.0,372.4 214.1,370.3 218.5,372.0 217.5,374.1"/><polygon points="217.5,374.1 218.5,372.0 222.9,373.7 221.9,375.8"/><polygon points="222.5,314.7 222.7,313.1 227.1,314.8 226.9,316.4"/><polygon points="226.9,316.4 227.1,314.8 231.5,316.5 231.3,318.1"/><polygon points="231.3,318.1 231.5,316.5 235.9,318.3 235.7,319.8"/><polygon points="235.7,319.8 235.9,318.3 240.3,320.0 240.1,321.5"/><polygon points="249.0,333.2 250.6,334.5 249.5,338.5 247.9,337.2"/><polygon points="247.9,337.2 249.5,338.5 248.4,342.6 246.8,341.3"/><polygon points="246.8,341.3 248.4,342.6 247.3,346.7 245.7,345.4"/><polygon points="245.7,345.4 247.3,346.7 246.3,350.7 244.6,349.4"/></g>
<g fill="#e4e4e4" stroke="#e4e4e4"><polygon points="205.2,366.8 206.2,364.7 210.7,366.4 209.6,368.5"/><polygon points="209.6,368.5 210.7,366.4 215.1,368.1 214.1,370.3"/><polygon points="214.1,370.3 215.1,368.1 219.5,369.8 218.5,372.0"/><polygon points="218.5,372.0 219.5,369.8 223.9,371.5 222.9,373.7"/><polygon points="221.9,318.1 222.2,316.3 226.6,318.1 226.3,319.8"/><polygon points="226.3,319.8 226.6,318.1 231.0,319.8 230.7,321.5"/><polygon points="230.7,321.5 231.0,319.8 235.5,321.5 235.2,323.2"/><polygon points="235.2,323.2 235.5,321.5 239.9,323.2 239.6,325.0"/><polygon points="245.4,330.7 247.2,331.9 246.1,336.0 244.3,334.8"/><polygon points="244.3,334.8 246.1,336.0 245.1,340.1 243.3,338.8"/><polygon points="243.3,338.8 245.1,340.1 244.0,344.1 242.2,342.9"/><polygon points="242.2,342.9 244.0,344.1 242.9,348.2 241.1,347.0"/><polygon points="204.0,317.1 206.4,317.3 205.3,321.4 202.9,321.1"/><polygon points="202.9,321.1 205.3,321.4 204.2,325.4 201.8,325.2"/><polygon points="201.8,325.2 204.2,325.4 203.1,329.5 200.7,329.3"/><polygon points="200.7,329.3 203.1,329.5 202.1,333.6 199.6,333.3"/></g>
<g fill="#eaeaea" stroke="#eaeaea"><polygon points="206.2,364.7 207.2,362.5 211.7,364.2 210.7,366.4"/><polygon points="210.7,366.4 211.7,364.2 216.1,365.9 215.1,368.1"/><polygon points="215.1,368.1 216.1,365.9 220.5,367.6 219.5,369.8"/><polygon points="219.5,369.8 220.5,367.6 224.9,369.3 223.9,371.5"/><polygon points="241.5,328.4 243.5,329.5 242.4,333.6 240.5,332.4"/><polygon points="240.5,332.4 242.4,333.6 241.4,337.6 239.4,336.5"/><polygon points="239.4,336.5 241.4,337.6 240.3,341.7 238.3,340.6"/><polygon points="238.3,340.6 240.3,341.7 239.2,345.8 237.2,344.6"/></g>
<g fill="#f3f3f3" stroke="#f3f3f3"><polygon points="207.2,362.5 208.2,360.2 212.7,361.9 211.7,364.2"/><polygon points="211.7,364.2 212.7,361.9 217.1,363.6 216.1,365.9"/><polygon points="216.1,365.9 217.1,363.6 221.5,365.4 220.5,367.6"/><polygon points="220.5,367.6 221.5,365.4 225.9,367.1 224.9,369.3"/><polygon points="213.7,318.4 216.2,318.9 215.1,323.0 212.7,322.5"/><polygon points="212.7,322.5 215.1,323.0 214.0,327.0 211.6,326.5"/><polygon points="211.6,326.5 214.0,327.0 213.0,331.1 210.5,330.6"/><polygon points="210.5,330.6 213.0,331.1 211.9,335.2 209.4,334.7"/></g>
<g fill="#f9f9f9" stroke="#f9f9f9"><polygon points="208.2,360.2 209.2,357.9 213.6,359.6 212.7,361.9"/><polygon points="212.7,361.9 213.6,359.6 218.1,361.4 217.1,363.6"/><polygon points="217.1,363.6 218.1,361.4 222.5,363.1 221.5,365.4"/><polygon points="221.5,365.4 222.5,363.1 226.9,364.8 225.9,367.1"/></g>
<g fill="#fcfcfc" stroke="#fcfcfc"><polygon points="209.2,357.9 210.2,355.6 214.6,357.3 213.6,359.6"/><polygon points="213.6,359.6 214.6,357.3 219.0,359.0 218.1,361.4"/><polygon points="218.1,361.4 219.0,359.0 223.4,360.8 222.5,363.1"/><polygon points="222.5,363.1 223.4,360.8 227.9,362.5 226.9,364.8"/><polygon points="234.1,329.2 236.3,330.2 235.2,334.3 233.0,333.3"/><polygon points="233.0,333.3 235.2,334.3 234.1,338.4 231.9,337.4"/><polygon points="218.7,319.5 221.1,320.1 220.0,324.2 217.6,323.5"/><polygon points="217.6,323.5 220.0,324.2 218.9,328.2 216.5,327.6"/><polygon points="216.5,327.6 218.9,328.2 217.9,332.3 215.4,331.7"/><polygon points="215.4,331.7 217.9,332.3 216.8,336.4 214.3,335.7"/></g>
<g fill="#ffffff" stroke="#ffffff"><polygon points="210.2,355.6 211.1,353.3 215.6,355.0 214.6,357.3"/><polygon points="214.6,357.3 215.6,355.0 220.0,356.7 219.0,359.0"/><polygon points="219.0,359.0 220.0,356.7 224.4,358.4 223.4,360.8"/><polygon points="223.4,360.8 224.4,358.4 228.8,360.1 227.9,362.5"/><polygon points="211.1,353.3 212.1,350.9 216.5,352.6 215.6,355.0"/><polygon points="215.6,355.0 216.5,352.6 220.9,354.3 220.0,356.7"/><polygon points="220.0,356.7 220.9,354.3 225.3,356.1 224.4,358.4"/><polygon points="224.4,358.4 225.3,356.1 229.7,357.8 228.8,360.1"/><polygon points="212.1,350.9 213.0,348.6 217.4,350.3 216.5,352.6"/><polygon points="216.5,352.6 217.4,350.3 221.8,352.0 220.9,354.3"/><polygon points="220.9,354.3 221.8,352.0 226.2,353.7 225.3,356.1"/><polygon points="225.3,356.1 226.2,353.7 230.6,355.4 229.7,357.8"/><polygon points="213.0,348.6 213.8,346.2 218.3,347.9 217.4,350.3"/><polygon points="217.4,350.3 218.3,347.9 222.7,349.6 221.8,352.0"/><polygon points="221.8,352.0 222.7,349.6 227.1,351.3 226.2,353.7"/><polygon points="226.2,353.7 227.1,351.3 231.5,353.1 230.6,355.4"/><polygon points="213.8,346.2 214.7,343.8 219.1,345.5 218.3,347.9"/><polygon points="218.3,347.9 219.1,345.5 223.5,347.3 222.7,349.6"/><polygon points="222.7,349.6 223.5,347.3 227.9,349.0 227.1,351.3"/><polygon points="227.1,351.3 227.9,349.0 232.4,350.7 231.5,353.1"/><polygon points="214.7,343.8 215.5,341.5 219.9,343.2 219.1,345.5"/><polygon points="219.1,345.5 219.9,343.2 224.3,344.9 223.5,347.3"/><polygon points="223.5,347.3 224.3,344.9 228.8,346.6 227.9,349.0"/><polygon points="227.9,349.0 228.8,346.6 233.2,348.3 232.4,350.7"/><polygon points="215.5,341.5 216.3,339.1 220.7,340.9 219.9,343.2"/><polygon points="219.9,343.2 220.7,340.9 225.1,342.6 224.3,344.9"/><polygon points="224.3,344.9 225.1,342.6 229.6,344.3 228.8,346.6"/><polygon points="228.8,346.6 229.6,344.3 234.0,346.0 233.2,348.3"/><polygon points="216.3,339.1 217.0,336.8 221.5,338.6 220.7,340.9"/><polygon points="220.7,340.9 221.5,338.6 225.9,340.3 225.1,342.6"/><polygon points="225.1,342.6 225.9,340.3 230.3,342.0 229.6,344.3"/><polygon points="229.6,344.3 230.3,342.0 234.7,343.7 234.0,346.0"/><polygon points="217.0,336.8 217.8,334.6 222.2,336.3 221.5,338.6"/><polygon points="221.5,338.6 222.2,336.3 226.6,338.0 225.9,340.3"/><polygon points="225.9,340.3 226.6,338.0 231.0,339.7 230.3,342.0"/><polygon points="230.3,342.0 231.0,339.7 235.4,341.4 234.7,343.7"/><polygon points="222.2,336.3 222.8,334.0 227.3,335.7 226.6,338.0"/><polygon points="226.6,338.0 227.3,335.7 231.7,337.5 231.0,339.7"/><polygon points="222.8,334.0 223.5,331.8 227.9,333.5 227.3,335.7"/><polygon points="227.3,335.7 227.9,333.5 232.3,335.3 231.7,337.5"/><polygon points="224.6,327.6 225.1,325.5 229.5,327.2 229.0,329.3"/><polygon points="229.0,329.3 229.5,327.2 234.0,329.0 233.5,331.0"/><polygon points="231.9,328.2 234.1,329.2 233.0,333.3 230.8,332.3"/><polygon points="230.8,332.3 233.0,333.3 231.9,337.4 229.7,336.4"/><polygon points="221.1,320.1 223.5,320.8 222.5,324.9 220.0,324.2"/><polygon points="220.0,324.2 222.5,324.9 221.4,328.9 218.9,328.2"/><polygon points="218.9,328.2 221.4,328.9 220.3,333.0 217.9,332.3"/><polygon points="217.9,332.3 220.3,333.0 219.2,337.1 216.8,336.4"/><polygon points="222.5,324.9 224.9,325.6 223.8,329.7 221.4,328.9"/><polygon points="221.4,328.9 223.8,329.7 222.7,333.8 220.3,333.0"/><polygon points="224.9,325.6 227.2,326.4 226.2,330.5 223.8,329.7"/><polygon points="223.8,329.7 226.2,330.5 225.1,334.6 222.7,333.8"/></g>
<g fill="#f6f6f6" stroke="#f6f6f6"><polygon points="225.1,325.5 225.6,323.6 230.0,325.3 229.5,327.2"/><polygon points="229.5,327.2 230.0,325.3 234.4,327.0 234.0,329.0"/><polygon points="237.4,326.2 239.5,327.2 238.4,331.3 236.3,330.2"/><polygon points="236.3,330.2 238.4,331.3 237.3,335.4 235.2,334.3"/><polygon points="235.2,334.3 237.3,335.4 236.2,339.4 234.1,338.4"/><polygon points="234.1,338.4 236.2,339.4 235.2,343.5 233.0,342.4"/><polygon points="216.2,318.9 218.7,319.5 217.6,323.5 215.1,323.0"/><polygon points="215.1,323.0 217.6,323.5 216.5,327.6 214.0,327.0"/><polygon points="214.0,327.0 216.5,327.6 215.4,331.7 213.0,331.1"/><polygon points="213.0,331.1 215.4,331.7 214.3,335.7 211.9,335.2"/></g>
<g fill="#f0f0f0" stroke="#f0f0f0"><polygon points="221.1,321.8 221.5,319.9 226.0,321.6 225.6,323.6"/><polygon points="225.6,323.6 226.0,321.6 230.4,323.4 230.0,325.3"/><polygon points="230.0,325.3 230.4,323.4 234.8,325.1 234.4,327.0"/><polygon points="234.4,327.0 234.8,325.1 239.2,326.8 238.8,328.7"/><polygon points="239.5,327.2 241.5,328.4 240.5,332.4 238.4,331.3"/><polygon points="238.4,331.3 240.5,332.4 239.4,336.5 237.3,335.4"/><polygon points="237.3,335.4 239.4,336.5 238.3,340.6 236.2,339.4"/><polygon points="236.2,339.4 238.3,340.6 237.2,344.6 235.2,343.5"/><polygon points="211.3,318.0 213.7,318.4 212.7,322.5 210.2,322.0"/><polygon points="210.2,322.0 212.7,322.5 211.6,326.5 209.1,326.1"/><polygon points="209.1,326.1 211.6,326.5 210.5,330.6 208.0,330.2"/><polygon points="208.0,330.2 210.5,330.6 209.4,334.7 206.9,334.2"/></g>
<g fill="#e7e7e7" stroke="#e7e7e7"><polygon points="221.5,319.9 221.9,318.1 226.3,319.8 226.0,321.6"/><polygon points="226.0,321.6 226.3,319.8 230.7,321.5 230.4,323.4"/><polygon points="230.4,323.4 230.7,321.5 235.2,323.2 234.8,325.1"/><polygon points="234.8,325.1 235.2,323.2 239.6,325.0 239.2,326.8"/><polygon points="243.5,329.5 245.4,330.7 244.3,334.8 242.4,333.6"/><polygon points="242.4,333.6 244.3,334.8 243.3,338.8 241.4,337.6"/><polygon points="241.4,337.6 243.3,338.8 242.2,342.9 240.3,341.7"/><polygon points="240.3,341.7 242.2,342.9 241.1,347.0 239.2,345.8"/><polygon points="206.4,317.3 208.8,317.6 207.7,321.7 205.3,321.4"/><polygon points="205.3,321.4 207.7,321.7 206.7,325.7 204.2,325.4"/><polygon points="204.2,325.4 206.7,325.7 205.6,329.8 203.1,329.5"/><polygon points="203.1,329.5 205.6,329.8 204.5,333.9 202.1,333.6"/></g>
<g fill="#dedede" stroke="#dedede"><polygon points="222.2,316.3 222.5,314.7 226.9,316.4 226.6,318.1"/><polygon points="226.6,318.1 226.9,316.4 231.3,318.1 231.0,319.8"/><polygon points="231.0,319.8 231.3,318.1 235.7,319.8 235.5,321.5"/><polygon points="235.5,321.5 235.7,319.8 240.1,321.5 239.9,323.2"/><polygon points="247.2,331.9 249.0,333.2 247.9,337.2 246.1,336.0"/><polygon points="246.1,336.0 247.9,337.2 246.8,341.3 245.1,340.1"/><polygon points="245.1,340.1 246.8,341.3 245.7,345.4 244.0,344.1"/><polygon points="244.0,344.1 245.7,345.4 244.6,349.4 242.9,348.2"/><polygon points="201.6,316.9 204.0,317.1 202.9,321.1 200.5,321.0"/><polygon points="200.5,321.0 202.9,321.1 201.8,325.2 199.4,325.0"/><polygon points="199.4,325.0 201.8,325.2 200.7,329.3 198.3,329.1"/><polygon points="198.3,329.1 200.7,329.3 199.6,333.3 197.3,333.2"/></g>
<g fill="#d8d8d8" stroke="#d8d8d8"><polygon points="222.7,313.1 222.8,311.6 227.2,313.3 227.1,314.8"/><polygon points="227.1,314.8 227.2,313.3 231.6,315.1 231.5,316.5"/><polygon points="231.5,316.5 231.6,315.1 236.1,316.8 235.9,318.3"/><polygon points="235.9,318.3 236.1,316.8 240.5,318.5 240.3,320.0"/><polygon points="250.6,334.5 252.1,335.8 251.0,339.8 249.5,338.5"/><polygon points="249.5,338.5 251.0,339.8 249.9,343.9 248.4,342.6"/><polygon points="248.4,342.6 249.9,343.9 248.9,348.0 247.3,346.7"/><polygon points="247.3,346.7 248.9,348.0 247.8,352.0 246.3,350.7"/><polygon points="199.2,316.8 201.6,316.9 200.5,321.0 198.1,320.9"/><polygon points="198.1,320.9 200.5,321.0 199.4,325.0 197.1,325.0"/><polygon points="197.1,325.0 199.4,325.0 198.3,329.1 196.0,329.0"/><polygon points="196.0,329.0 198.3,329.1 197.3,333.2 194.9,333.1"/></g>
<g fill="#d2d2d2" stroke="#d2d2d2"><polygon points="222.9,310.2 222.9,309.0 227.4,310.7 227.3,312.0"/><polygon points="227.3,312.0 227.4,310.7 231.8,312.4 231.7,313.7"/><polygon points="231.7,313.7 231.8,312.4 236.2,314.1 236.2,315.4"/><polygon points="236.2,315.4 236.2,314.1 240.6,315.8 240.6,317.1"/><polygon points="252.1,335.8 253.5,337.1 252.5,341.1 251.0,339.8"/><polygon points="251.0,339.8 252.5,341.1 251.4,345.2 249.9,343.9"/><polygon points="249.9,343.9 251.4,345.2 250.3,349.3 248.9,348.0"/><polygon points="248.9,348.0 250.3,349.3 249.2,353.3 247.8,352.0"/><polygon points="196.9,316.8 199.2,316.8 198.1,320.9 195.8,320.9"/><polygon points="195.8,320.9 198.1,320.9 197.1,325.0 194.8,324.9"/><polygon points="194.8,324.9 197.1,325.0 196.0,329.0 193.7,329.0"/><polygon points="193.7,329.0 196.0,329.0 194.9,333.1 192.6,333.1"/></g>
<g fill="#cfcfcf" stroke="#cfcfcf"><polygon points="222.9,309.0 222.9,307.8 227.3,309.5 227.4,310.7"/><polygon points="227.4,310.7 227.3,309.5 231.8,311.2 231.8,312.4"/><polygon points="231.8,312.4 231.8,311.2 236.2,312.9 236.2,314.1"/><polygon points="236.2,314.1 236.2,312.9 240.6,314.7 240.6,315.8"/><polygon points="253.5,337.1 254.9,338.4 253.8,342.5 252.5,341.1"/><polygon points="252.5,341.1 253.8,342.5 252.7,346.6 251.4,345.2"/><polygon points="251.4,345.2 252.7,346.6 251.6,350.6 250.3,349.3"/><polygon points="250.3,349.3 251.6,350.6 250.5,354.7 249.2,353.3"/></g>
<g fill="#c9c9c9" stroke="#c9c9c9"><polygon points="222.9,306.7 222.7,305.8 227.2,307.5 227.3,308.4"/><polygon points="227.3,308.4 227.2,307.5 231.6,309.2 231.7,310.2"/><polygon points="231.7,310.2 231.6,309.2 236.0,310.9 236.1,311.9"/><polygon points="236.1,311.9 236.0,310.9 240.4,312.6 240.5,313.6"/><polygon points="256.1,339.8 257.2,341.1 256.1,345.2 255.0,343.8"/><polygon points="255.0,343.8 256.1,345.2 255.0,349.3 253.9,347.9"/><polygon points="253.9,347.9 255.0,349.3 253.9,353.3 252.8,352.0"/><polygon points="252.8,352.0 253.9,353.3 252.8,357.4 251.7,356.0"/></g>
<g fill="#c6c6c6" stroke="#c6c6c6"><polygon points="222.7,305.8 222.6,304.9 227.0,306.7 227.2,307.5"/><polygon points="227.2,307.5 227.0,306.7 231.4,308.4 231.6,309.2"/><polygon points="231.6,309.2 231.4,308.4 235.8,310.1 236.0,310.9"/><polygon points="236.0,310.9 235.8,310.1 240.2,311.8 240.4,312.6"/><polygon points="192.5,317.0 194.7,316.9 193.6,320.9 191.4,321.1"/><polygon points="191.4,321.1 193.6,320.9 192.5,325.0 190.3,325.1"/><polygon points="190.3,325.1 192.5,325.0 191.4,329.1 189.2,329.2"/><polygon points="189.2,329.2 191.4,329.1 190.3,333.1 188.1,333.3"/></g>
<g fill="#c0c0c0" stroke="#c0c0c0"><polygon points="222.3,304.2 222.1,303.6 226.5,305.3 226.8,305.9"/><polygon points="226.8,305.9 226.5,305.3 230.9,307.1 231.2,307.7"/><polygon points="231.2,307.7 230.9,307.1 235.3,308.8 235.6,309.4"/><polygon points="235.6,309.4 235.3,308.8 239.7,310.5 240.0,311.1"/><polygon points="222.1,303.6 221.7,303.1 226.2,304.9 226.5,305.3"/><polygon points="226.5,305.3 226.2,304.9 230.6,306.6 230.9,307.1"/><polygon points="230.9,307.1 230.6,306.6 235.0,308.3 235.3,308.8"/><polygon points="235.3,308.8 235.0,308.3 239.4,310.0 239.7,310.5"/><polygon points="258.1,342.5 259.0,343.9 257.9,347.9 257.1,346.6"/><polygon points="257.1,346.6 257.9,347.9 256.8,352.0 256.0,350.6"/><polygon points="256.0,350.6 256.8,352.0 255.8,356.1 254.9,354.7"/><polygon points="254.9,354.7 255.8,356.1 254.7,360.1 253.8,358.8"/><polygon points="190.3,317.2 192.5,317.0 191.4,321.1 189.2,321.3"/><polygon points="189.2,321.3 191.4,321.1 190.3,325.1 188.1,325.3"/><polygon points="188.1,325.3 190.3,325.1 189.2,329.2 187.1,329.4"/><polygon points="187.1,329.4 189.2,329.2 188.1,333.3 186.0,333.5"/></g>
<g fill="#bdbdbd" stroke="#bdbdbd"><polygon points="221.7,303.1 221.4,302.8 225.8,304.5 226.2,304.9"/><polygon points="226.2,304.9 225.8,304.5 230.2,306.2 230.6,306.6"/><polygon points="230.6,306.6 230.2,306.2 234.6,307.9 235.0,308.3"/><polygon points="235.0,308.3 234.6,307.9 239.0,309.6 239.4,310.0"/><polygon points="259.0,343.9 259.7,345.2 258.7,349.3 257.9,347.9"/><polygon points="257.9,347.9 258.7,349.3 257.6,353.3 256.8,352.0"/><polygon points="256.8,352.0 257.6,353.3 256.5,357.4 255.8,356.1"/><polygon points="255.8,356.1 256.5,357.4 255.4,361.5 254.7,360.1"/></g>
<g fill="#878787" stroke="#878787"><polygon points="186.0,392.6 186.5,392.7 190.9,394.4 190.4,394.3"/><polygon points="190.4,394.3 190.9,394.4 195.3,396.1 194.8,396.0"/><polygon points="194.8,396.0 195.3,396.1 199.7,397.9 199.2,397.7"/><polygon points="199.2,397.7 199.7,397.9 204.1,399.6 203.7,399.5"/><polygon points="186.5,392.7 187.0,392.7 191.4,394.4 190.9,394.4"/><polygon points="190.9,394.4 191.4,394.4 195.8,396.1 195.3,396.1"/><polygon points="195.3,396.1 195.8,396.1 200.2,397.8 199.7,397.9"/><polygon points="199.7,397.9 200.2,397.8 204.7,399.6 204.1,399.6"/><polygon points="187.0,392.7 187.5,392.6 192.0,394.3 191.4,394.4"/><polygon points="191.4,394.4 192.0,394.3 196.4,396.0 195.8,396.1"/><polygon points="195.8,396.1 196.4,396.0 200.8,397.7 200.2,397.8"/><polygon points="200.2,397.8 200.8,397.7 205.2,399.4 204.7,399.6"/><polygon points="187.5,392.6 188.2,392.3 192.6,394.0 192.0,394.3"/><polygon points="192.0,394.3 192.6,394.0 197.0,395.7 196.4,396.0"/><polygon points="196.4,396.0 197.0,395.7 201.4,397.5 200.8,397.7"/><polygon points="200.8,397.7 201.4,397.5 205.8,399.2 205.2,399.4"/><polygon points="188.2,392.3 188.8,391.9 193.2,393.6 192.6,394.0"/><polygon points="192.6,394.0 193.2,393.6 197.6,395.4 197.0,395.7"/><polygon points="197.0,395.7 197.6,395.4 202.1,397.1 201.4,397.5"/><polygon points="201.4,397.5 202.1,397.1 206.5,398.8 205.8,399.2"/><polygon points="188.8,391.9 189.5,391.4 193.9,393.1 193.2,393.6"/><polygon points="193.2,393.6 193.9,393.1 198.3,394.9 197.6,395.4"/><polygon points="197.6,395.4 198.3,394.9 202.8,396.6 202.1,397.1"/><polygon points="202.1,397.1 202.8,396.6 207.2,398.3 206.5,398.8"/><polygon points="189.5,391.4 190.2,390.8 194.6,392.5 193.9,393.1"/><polygon points="193.9,393.1 194.6,392.5 199.1,394.2 198.3,394.9"/><polygon points="198.3,394.9 199.1,394.2 203.5,396.0 202.8,396.6"/><polygon points="202.8,396.6 203.5,396.0 207.9,397.7 207.2,398.3"/><polygon points="194.6,392.5 195.4,391.8 199.8,393.5 199.1,394.2"/><polygon points="199.1,394.2 199.8,393.5 204.3,395.2 203.5,396.0"/><polygon points="167.9,330.2 168.3,329.0 167.2,333.1 166.8,334.2"/><polygon points="166.8,334.2 167.2,333.1 166.1,337.1 165.7,338.3"/><polygon points="165.7,338.3 166.1,337.1 165.0,341.2 164.6,342.4"/><polygon points="164.6,342.4 165.0,341.2 163.9,345.3 163.5,346.4"/><polygon points="167.2,333.1 167.7,331.9 166.7,336.0 166.1,337.1"/><polygon points="166.1,337.1 166.7,336.0 165.6,340.1 165.0,341.2"/><polygon points="167.7,331.9 168.4,330.8 167.3,334.9 166.7,336.0"/><polygon points="166.7,336.0 167.3,334.9 166.2,339.0 165.6,340.1"/><polygon points="170.1,328.8 171.1,327.8 170.0,331.9 169.0,332.8"/><polygon points="169.0,332.8 170.0,331.9 169.0,336.0 167.9,336.9"/><polygon points="171.1,327.8 172.3,326.9 171.2,331.0 170.0,331.9"/><polygon points="170.0,331.9 171.2,331.0 170.1,335.1 169.0,336.0"/></g>
<g fill="#8a8a8a" stroke="#8a8a8a"><polygon points="195.4,391.8 196.2,390.9 200.6,392.6 199.8,393.5"/><polygon points="199.8,393.5 200.6,392.6 205.1,394.4 204.3,395.2"/><polygon points="173.3,322.9 174.6,322.0 173.5,326.1 172.3,326.9"/><polygon points="172.3,326.9 173.5,326.1 172.4,330.1 171.2,331.0"/><polygon points="171.2,331.0 172.4,330.1 171.4,334.2 170.1,335.1"/><polygon points="170.1,335.1 171.4,334.2 170.3,338.3 169.0,339.1"/></g>
<g fill="#b7b7b7" stroke="#b7b7b7"><polygon points="260.4,346.6 260.8,347.9 259.8,352.0 259.3,350.6"/><polygon points="259.3,350.6 259.8,352.0 258.7,356.0 258.2,354.7"/><polygon points="258.2,354.7 258.7,356.0 257.6,360.1 257.1,358.8"/><polygon points="257.1,358.8 257.6,360.1 256.5,364.2 256.0,362.8"/></g>
<g fill="#b4b4b4" stroke="#b4b4b4"><polygon points="260.8,347.9 261.2,349.2 260.1,353.3 259.8,352.0"/><polygon points="259.8,352.0 260.1,353.3 259.0,357.4 258.7,356.0"/><polygon points="258.7,356.0 259.0,357.4 257.9,361.4 257.6,360.1"/><polygon points="257.6,360.1 257.9,361.4 256.9,365.5 256.5,364.2"/><polygon points="186.2,317.8 188.2,317.5 187.1,321.5 185.1,321.9"/><polygon points="185.1,321.9 187.1,321.5 186.1,325.6 184.0,325.9"/><polygon points="184.0,325.9 186.1,325.6 185.0,329.7 183.0,330.0"/><polygon points="183.0,330.0 185.0,329.7 183.9,333.7 181.9,334.1"/></g>
<g fill="#aeaeae" stroke="#aeaeae"><polygon points="261.4,350.6 261.5,351.9 260.4,355.9 260.3,354.6"/><polygon points="260.3,354.6 260.4,355.9 259.4,360.0 259.3,358.7"/><polygon points="259.3,358.7 259.4,360.0 258.3,364.1 258.2,362.8"/><polygon points="258.2,362.8 258.3,364.1 257.2,368.1 257.1,366.8"/><polygon points="184.3,318.2 186.2,317.8 185.1,321.9 183.2,322.3"/><polygon points="183.2,322.3 185.1,321.9 184.0,325.9 182.1,326.3"/><polygon points="182.1,326.3 184.0,325.9 183.0,330.0 181.0,330.4"/><polygon points="181.0,330.4 183.0,330.0 181.9,334.1 180.0,334.5"/></g>
<g fill="#a5a5a5" stroke="#a5a5a5"><polygon points="261.5,353.1 261.3,354.4 260.3,358.4 260.4,357.2"/><polygon points="260.4,357.2 260.3,358.4 259.2,362.5 259.3,361.3"/><polygon points="259.3,361.3 259.2,362.5 258.1,366.6 258.3,365.3"/><polygon points="258.3,365.3 258.1,366.6 257.0,370.6 257.2,369.4"/></g>
<g fill="#9c9c9c" stroke="#9c9c9c"><polygon points="179.0,319.8 180.7,319.2 179.6,323.3 177.9,323.9"/><polygon points="177.9,323.9 179.6,323.3 178.5,327.4 176.8,328.0"/><polygon points="176.8,328.0 178.5,327.4 177.4,331.4 175.8,332.0"/><polygon points="175.8,332.0 177.4,331.4 176.3,335.5 174.7,336.1"/></g>
<g fill="#ededed" stroke="#ededed"><polygon points="208.8,317.6 211.3,318.0 210.2,322.0 207.7,321.7"/><polygon points="207.7,321.7 210.2,322.0 209.1,326.1 206.7,325.7"/><polygon points="206.7,325.7 209.1,326.1 208.0,330.2 205.6,329.8"/><polygon points="205.6,329.8 208.0,330.2 206.9,334.2 204.5,333.9"/></g>
<g fill="#787878" stroke="#787878"><polygon points="246.4,385.5 245.0,387.1 246.7,385.2 248.1,383.6"/><polygon points="248.1,383.6 246.7,385.2 248.3,383.2 249.7,381.6"/><polygon points="249.7,381.6 248.3,383.2 249.9,381.3 251.3,379.6"/><polygon points="251.3,379.6 249.9,381.3 251.5,379.3 252.9,377.7"/><polygon points="197.5,392.7 195.3,391.6 196.9,389.7 199.2,390.7"/><polygon points="199.2,390.7 196.9,389.7 198.5,387.7 200.8,388.8"/><polygon points="195.3,391.6 193.1,390.4 194.7,388.5 196.9,389.7"/><polygon points="196.9,389.7 194.7,388.5 196.3,386.5 198.5,387.7"/><polygon points="191.4,392.4 189.3,391.1 190.9,389.2 193.1,390.4"/><polygon points="193.1,390.4 190.9,389.2 192.5,387.2 194.7,388.5"/><polygon points="194.7,388.5 192.5,387.2 194.1,385.3 196.3,386.5"/><polygon points="196.3,386.5 194.1,385.3 195.8,383.3 197.9,384.6"/><polygon points="189.3,391.1 187.2,389.8 188.8,387.8 190.9,389.2"/><polygon points="190.9,389.2 188.8,387.8 190.4,385.8 192.5,387.2"/><polygon points="192.5,387.2 190.4,385.8 192.0,383.9 194.1,385.3"/><polygon points="194.1,385.3 192.0,383.9 193.6,381.9 195.8,383.3"/><polygon points="187.2,389.8 185.1,388.3 186.7,386.3 188.8,387.8"/><polygon points="188.8,387.8 186.7,386.3 188.3,384.4 190.4,385.8"/><polygon points="190.4,385.8 188.3,384.4 190.0,382.4 192.0,383.9"/><polygon points="192.0,383.9 190.0,382.4 191.6,380.5 193.6,381.9"/><polygon points="185.1,388.3 183.1,386.7 184.7,384.8 186.7,386.3"/><polygon points="186.7,386.3 184.7,384.8 186.3,382.8 188.3,384.4"/><polygon points="188.3,384.4 186.3,382.8 188.0,380.9 190.0,382.4"/><polygon points="190.0,382.4 188.0,380.9 189.6,378.9 191.6,380.5"/><polygon points="183.1,386.7 181.2,385.1 182.8,383.1 184.7,384.8"/><polygon points="184.7,384.8 182.8,383.1 184.4,381.2 186.3,382.8"/><polygon points="186.3,382.8 184.4,381.2 186.0,379.2 188.0,380.9"/><polygon points="188.0,380.9 186.0,379.2 187.7,377.3 189.6,378.9"/><polygon points="181.2,385.1 179.3,383.4 181.0,381.4 182.8,383.1"/><polygon points="182.8,383.1 181.0,381.4 182.6,379.4 184.4,381.2"/><polygon points="184.4,381.2 182.6,379.4 184.2,377.5 186.0,379.2"/><polygon points="186.0,379.2 184.2,377.5 185.8,375.5 187.7,377.3"/><polygon points="179.3,383.4 177.6,381.6 179.2,379.6 181.0,381.4"/><polygon points="181.0,381.4 179.2,379.6 180.8,377.6 182.6,379.4"/><polygon points="182.6,379.4 180.8,377.6 182.4,375.7 184.2,377.5"/><polygon points="184.2,377.5 182.4,375.7 184.1,373.7 185.8,375.5"/><polygon points="177.6,381.6 175.9,379.7 177.5,377.7 179.2,379.6"/><polygon points="179.2,379.6 177.5,377.7 179.1,375.8 180.8,377.6"/><polygon points="180.8,377.6 179.1,375.8 180.8,373.8 182.4,375.7"/><polygon points="182.4,375.7 180.8,373.8 182.4,371.8 184.1,373.7"/><polygon points="175.9,379.7 174.3,377.7 175.9,375.8 177.5,377.7"/><polygon points="177.5,377.7 175.9,375.8 177.6,373.8 179.1,375.8"/><polygon points="179.1,375.8 177.6,373.8 179.2,371.9 180.8,373.8"/><polygon points="180.8,373.8 179.2,371.9 180.8,369.9 182.4,371.8"/><polygon points="174.3,377.7 172.8,375.7 174.4,373.8 175.9,375.8"/><polygon points="175.9,375.8 174.4,373.8 176.1,371.8 177.6,373.8"/><polygon points="177.6,373.8 176.1,371.8 177.7,369.8 179.2,371.9"/><polygon points="179.2,371.9 177.7,369.8 179.3,367.9 180.8,369.9"/></g>
<g fill="#757575" stroke="#757575"><polygon points="245.0,387.1 243.5,388.7 245.1,386.7 246.7,385.2"/><polygon points="246.7,385.2 245.1,386.7 246.8,384.7 248.3,383.2"/><polygon points="248.3,383.2 246.8,384.7 248.4,382.8 249.9,381.3"/><polygon points="249.9,381.3 248.4,382.8 250.0,380.8 251.5,379.3"/><polygon points="243.5,388.7 241.9,390.1 243.5,388.2 245.1,386.7"/><polygon points="245.1,386.7 243.5,388.2 245.2,386.2 246.8,384.7"/><polygon points="246.8,384.7 245.2,386.2 246.8,384.2 248.4,382.8"/><polygon points="248.4,382.8 246.8,384.2 248.4,382.3 250.0,380.8"/><polygon points="241.9,390.1 240.2,391.5 241.8,389.5 243.5,388.2"/><polygon points="243.5,388.2 241.8,389.5 243.5,387.5 245.2,386.2"/><polygon points="245.2,386.2 243.5,387.5 245.1,385.6 246.8,384.2"/><polygon points="246.8,384.2 245.1,385.6 246.7,383.6 248.4,382.3"/><polygon points="214.8,399.0 212.4,398.9 214.0,396.9 216.4,397.1"/><polygon points="216.4,397.1 214.0,396.9 215.7,395.0 218.0,395.1"/><polygon points="218.0,395.1 215.7,395.0 217.3,393.0 219.6,393.2"/><polygon points="219.6,393.2 217.3,393.0 218.9,391.1 221.3,391.2"/><polygon points="212.4,398.9 210.0,398.6 211.7,396.7 214.0,396.9"/><polygon points="214.0,396.9 211.7,396.7 213.3,394.7 215.7,395.0"/><polygon points="215.7,395.0 213.3,394.7 214.9,392.8 217.3,393.0"/><polygon points="217.3,393.0 214.9,392.8 216.5,390.8 218.9,391.1"/><polygon points="210.0,398.6 207.7,398.3 209.3,396.3 211.7,396.7"/><polygon points="211.7,396.7 209.3,396.3 210.9,394.3 213.3,394.7"/><polygon points="213.3,394.7 210.9,394.3 212.5,392.4 214.9,392.8"/><polygon points="214.9,392.8 212.5,392.4 214.1,390.4 216.5,390.8"/><polygon points="207.7,398.3 205.3,397.8 206.9,395.8 209.3,396.3"/><polygon points="209.3,396.3 206.9,395.8 208.5,393.9 210.9,394.3"/><polygon points="210.9,394.3 208.5,393.9 210.1,391.9 212.5,392.4"/><polygon points="212.5,392.4 210.1,391.9 211.8,389.9 214.1,390.4"/><polygon points="206.9,395.8 204.5,395.2 206.1,393.2 208.5,393.9"/><polygon points="208.5,393.9 206.1,393.2 207.8,391.3 210.1,391.9"/><polygon points="204.5,395.2 202.2,394.5 203.8,392.5 206.1,393.2"/><polygon points="206.1,393.2 203.8,392.5 205.4,390.5 207.8,391.3"/><polygon points="172.8,375.7 171.4,373.7 173.1,371.7 174.4,373.8"/><polygon points="174.4,373.8 173.1,371.7 174.7,369.7 176.1,371.8"/><polygon points="176.1,371.8 174.7,369.7 176.3,367.8 177.7,369.8"/><polygon points="177.7,369.8 176.3,367.8 177.9,365.8 179.3,367.9"/><polygon points="171.4,373.7 170.1,371.6 171.8,369.6 173.1,371.7"/><polygon points="173.1,371.7 171.8,369.6 173.4,367.6 174.7,369.7"/><polygon points="174.7,369.7 173.4,367.6 175.0,365.7 176.3,367.8"/><polygon points="176.3,367.8 175.0,365.7 176.6,363.7 177.9,365.8"/><polygon points="170.1,371.6 169.0,369.4 170.6,367.4 171.8,369.6"/><polygon points="171.8,369.6 170.6,367.4 172.2,365.5 173.4,367.6"/><polygon points="173.4,367.6 172.2,365.5 173.8,363.5 175.0,365.7"/><polygon points="175.0,365.7 173.8,363.5 175.4,361.5 176.6,363.7"/><polygon points="169.0,369.4 167.9,367.2 169.5,365.2 170.6,367.4"/><polygon points="170.6,367.4 169.5,365.2 171.1,363.3 172.2,365.5"/><polygon points="172.2,365.5 171.1,363.3 172.8,361.3 173.8,363.5"/><polygon points="173.8,363.5 172.8,361.3 174.4,359.3 175.4,361.5"/><polygon points="167.9,367.2 166.9,364.9 168.6,363.0 169.5,365.2"/><polygon points="169.5,365.2 168.6,363.0 170.2,361.0 171.1,363.3"/><polygon points="171.1,363.3 170.2,361.0 171.8,359.1 172.8,361.3"/><polygon points="172.8,361.3 171.8,359.1 173.4,357.1 174.4,359.3"/><polygon points="166.9,364.9 166.1,362.7 167.7,360.7 168.6,363.0"/><polygon points="168.6,363.0 167.7,360.7 169.3,358.8 170.2,361.0"/><polygon points="170.2,361.0 169.3,358.8 171.0,356.8 171.8,359.1"/><polygon points="171.8,359.1 171.0,356.8 172.6,354.8 173.4,357.1"/><polygon points="166.1,362.7 165.4,360.4 167.0,358.4 167.7,360.7"/><polygon points="167.7,360.7 167.0,358.4 168.6,356.5 169.3,358.8"/><polygon points="169.3,358.8 168.6,356.5 170.2,354.5 171.0,356.8"/><polygon points="171.0,356.8 170.2,354.5 171.8,352.6 172.6,354.8"/><polygon points="165.4,360.4 164.8,358.1 166.4,356.1 167.0,358.4"/><polygon points="167.0,358.4 166.4,356.1 168.0,354.2 168.6,356.5"/><polygon points="168.6,356.5 168.0,354.2 169.6,352.2 170.2,354.5"/><polygon points="170.2,354.5 169.6,352.2 171.2,350.3 171.8,352.6"/></g>
<g fill="#727272" stroke="#727272"><polygon points="240.2,391.5 238.5,392.7 240.1,390.7 241.8,389.5"/><polygon points="241.8,389.5 240.1,390.7 241.7,388.8 243.5,387.5"/><polygon points="243.5,387.5 241.7,388.8 243.3,386.8 245.1,385.6"/><polygon points="245.1,385.6 243.3,386.8 244.9,384.9 246.7,383.6"/><polygon points="238.5,392.7 236.6,393.8 238.2,391.9 240.1,390.7"/><polygon points="240.1,390.7 238.2,391.9 239.8,389.9 241.7,388.8"/><polygon points="241.7,388.8 239.8,389.9 241.4,388.0 243.3,386.8"/><polygon points="243.3,386.8 241.4,388.0 243.1,386.0 244.9,384.9"/><polygon points="236.6,393.8 234.7,394.9 236.3,392.9 238.2,391.9"/><polygon points="238.2,391.9 236.3,392.9 237.9,391.0 239.8,389.9"/><polygon points="239.8,389.9 237.9,391.0 239.5,389.0 241.4,388.0"/><polygon points="241.4,388.0 239.5,389.0 241.1,387.0 243.1,386.0"/><polygon points="234.7,394.9 232.7,395.8 234.3,393.8 236.3,392.9"/><polygon points="236.3,392.9 234.3,393.8 235.9,391.9 237.9,391.0"/><polygon points="237.9,391.0 235.9,391.9 237.5,389.9 239.5,389.0"/><polygon points="239.5,389.0 237.5,389.9 239.1,388.0 241.1,387.0"/><polygon points="232.7,395.8 230.6,396.6 232.2,394.7 234.3,393.8"/><polygon points="234.3,393.8 232.2,394.7 233.8,392.7 235.9,391.9"/><polygon points="235.9,391.9 233.8,392.7 235.4,390.7 237.5,389.9"/><polygon points="237.5,389.9 235.4,390.7 237.1,388.8 239.1,388.0"/><polygon points="230.6,396.6 228.5,397.3 230.1,395.4 232.2,394.7"/><polygon points="232.2,394.7 230.1,395.4 231.7,393.4 233.8,392.7"/><polygon points="233.8,392.7 231.7,393.4 233.3,391.4 235.4,390.7"/><polygon points="235.4,390.7 233.3,391.4 234.9,389.5 237.1,388.8"/><polygon points="228.5,397.3 226.3,397.9 227.9,395.9 230.1,395.4"/><polygon points="230.1,395.4 227.9,395.9 229.5,394.0 231.7,393.4"/><polygon points="231.7,393.4 229.5,394.0 231.1,392.0 233.3,391.4"/><polygon points="233.3,391.4 231.1,392.0 232.8,390.1 234.9,389.5"/><polygon points="226.3,397.9 224.0,398.4 225.7,396.4 227.9,395.9"/><polygon points="227.9,395.9 225.7,396.4 227.3,394.5 229.5,394.0"/><polygon points="229.5,394.0 227.3,394.5 228.9,392.5 231.1,392.0"/><polygon points="231.1,392.0 228.9,392.5 230.5,390.5 232.8,390.1"/><polygon points="224.0,398.4 221.8,398.7 223.4,396.8 225.7,396.4"/><polygon points="225.7,396.4 223.4,396.8 225.0,394.8 227.3,394.5"/><polygon points="227.3,394.5 225.0,394.8 226.6,392.8 228.9,392.5"/><polygon points="228.9,392.5 226.6,392.8 228.3,390.9 230.5,390.5"/><polygon points="221.8,398.7 219.5,398.9 221.1,397.0 223.4,396.8"/><polygon points="223.4,396.8 221.1,397.0 222.7,395.0 225.0,394.8"/><polygon points="225.0,394.8 222.7,395.0 224.3,393.1 226.6,392.8"/><polygon points="226.6,392.8 224.3,393.1 225.9,391.1 228.3,390.9"/><polygon points="219.5,398.9 217.1,399.1 218.8,397.1 221.1,397.0"/><polygon points="221.1,397.0 218.8,397.1 220.4,395.1 222.7,395.0"/><polygon points="222.7,395.0 220.4,395.1 222.0,393.2 224.3,393.1"/><polygon points="224.3,393.1 222.0,393.2 223.6,391.2 225.9,391.1"/><polygon points="217.1,399.1 214.8,399.0 216.4,397.1 218.8,397.1"/><polygon points="218.8,397.1 216.4,397.1 218.0,395.1 220.4,395.1"/><polygon points="220.4,395.1 218.0,395.1 219.6,393.2 222.0,393.2"/><polygon points="222.0,393.2 219.6,393.2 221.3,391.2 223.6,391.2"/><polygon points="164.8,358.1 164.3,355.8 165.9,353.8 166.4,356.1"/><polygon points="166.4,356.1 165.9,353.8 167.5,351.9 168.0,354.2"/><polygon points="168.0,354.2 167.5,351.9 169.1,349.9 169.6,352.2"/><polygon points="169.6,352.2 169.1,349.9 170.8,347.9 171.2,350.3"/><polygon points="164.3,355.8 163.9,353.5 165.5,351.5 165.9,353.8"/><polygon points="165.9,353.8 165.5,351.5 167.2,349.6 167.5,351.9"/><polygon points="167.5,351.9 167.2,349.6 168.8,347.6 169.1,349.9"/><polygon points="169.1,349.9 168.8,347.6 170.4,345.6 170.8,347.9"/><polygon points="163.9,353.5 163.7,351.2 165.3,349.2 165.5,351.5"/><polygon points="165.5,351.5 165.3,349.2 166.9,347.3 167.2,349.6"/><polygon points="167.2,349.6 166.9,347.3 168.5,345.3 168.8,347.6"/><polygon points="168.8,347.6 168.5,345.3 170.2,343.3 170.4,345.6"/><polygon points="163.7,351.2 163.6,348.9 165.2,346.9 165.3,349.2"/><polygon points="165.3,349.2 165.2,346.9 166.8,345.0 166.9,347.3"/><polygon points="166.9,347.3 166.8,345.0 168.4,343.0 168.5,345.3"/><polygon points="168.5,345.3 168.4,343.0 170.0,341.0 170.2,343.3"/><polygon points="163.6,348.9 163.6,346.6 165.2,344.6 165.2,346.9"/><polygon points="165.2,346.9 165.2,344.6 166.8,342.7 166.8,345.0"/><polygon points="166.8,345.0 166.8,342.7 168.4,340.7 168.4,343.0"/><polygon points="168.4,343.0 168.4,340.7 170.1,338.8 170.0,341.0"/><polygon points="163.6,346.6 163.7,344.3 165.3,342.4 165.2,344.6"/><polygon points="165.2,344.6 165.3,342.4 167.0,340.4 166.8,342.7"/><polygon points="166.8,342.7 167.0,340.4 168.6,338.5 168.4,340.7"/><polygon points="168.4,340.7 168.6,338.5 170.2,336.5 170.1,338.8"/><polygon points="165.3,342.4 165.6,340.2 167.2,338.2 167.0,340.4"/><polygon points="167.0,340.4 167.2,338.2 168.8,336.2 168.6,338.5"/><polygon points="165.6,340.2 166.0,338.0 167.6,336.0 167.2,338.2"/><polygon points="167.2,338.2 167.6,336.0 169.2,334.0 168.8,336.2"/><polygon points="167.1,333.7 167.9,331.7 169.5,329.7 168.7,331.7"/><polygon points="168.7,331.7 169.5,329.7 171.1,327.7 170.3,329.8"/><polygon points="167.9,331.7 168.7,329.7 170.3,327.7 169.5,329.7"/><polygon points="169.5,329.7 170.3,327.7 172.0,325.7 171.1,327.7"/><polygon points="167.1,331.6 168.1,329.7 169.7,327.7 168.7,329.7"/><polygon points="168.7,329.7 169.7,327.7 171.3,325.8 170.3,327.7"/><polygon points="170.3,327.7 171.3,325.8 172.9,323.8 172.0,325.7"/><polygon points="172.0,325.7 172.9,323.8 174.6,321.8 173.6,323.8"/><polygon points="168.1,329.7 169.2,327.8 170.8,325.9 169.7,327.7"/><polygon points="169.7,327.7 170.8,325.9 172.4,323.9 171.3,325.8"/><polygon points="171.3,325.8 172.4,323.9 174.0,321.9 172.9,323.8"/><polygon points="172.9,323.8 174.0,321.9 175.7,320.0 174.6,321.8"/><polygon points="169.2,327.8 170.4,326.0 172.0,324.1 170.8,325.9"/><polygon points="170.8,325.9 172.0,324.1 173.6,322.1 172.4,323.9"/><polygon points="172.4,323.9 173.6,322.1 175.2,320.2 174.0,321.9"/><polygon points="174.0,321.9 175.2,320.2 176.9,318.2 175.7,320.0"/><polygon points="170.4,326.0 171.7,324.3 173.3,322.4 172.0,324.1"/><polygon points="172.0,324.1 173.3,322.4 174.9,320.4 173.6,322.1"/><polygon points="173.6,322.1 174.9,320.4 176.5,318.4 175.2,320.2"/><polygon points="175.2,320.2 176.5,318.4 178.2,316.5 176.9,318.2"/></g>
</svg>
<div class="nm" style="top:24px;background:#808080;border-top:1px solid #a3a3a3;border-left:1px solid #a3a3a3;border-bottom:1px solid #484848;border-right:1px solid #484848"></div>
<span class="t h" style="left:646.5px;top:27.5px;color:#fff;letter-spacing:0.001px">all</span>
<div class="bt" style="left:778px;top:24px;background:#8080ff;border-top:1px solid #a8a8ff;border-left:1px solid #a8a8ff;border-bottom:1px solid #5c5cb8;border-right:1px solid #5c5cb8"></div>
<span class="t" style="left:782.5px;top:27.5px;color:#000;letter-spacing:0.001px">A</span>
<div class="bt" style="left:795px;top:24px;background:#9e9ecd;border-top:1px solid #bcbce0;border-left:1px solid #bcbce0;border-bottom:1px solid #72729a;border-right:1px solid #72729a"></div>
<span class="t" style="left:799.5px;top:27.5px;color:#000;letter-spacing:0.001px">S</span>
<div class="bt" style="left:812px;top:24px;background:#686898;border-top:1px solid #8a8ab4;border-left:1px solid #8a8ab4;border-bottom:1px solid #4a4a70;border-right:1px solid #4a4a70"></div>
<span class="t" style="left:816.5px;top:27.5px;color:#000;letter-spacing:0.001px">H</span>
<div class="bt" style="left:829px;top:24px;background:#8080ff;border-top:1px solid #a8a8ff;border-left:1px solid #a8a8ff;border-bottom:1px solid #5c5cb8;border-right:1px solid #5c5cb8"></div>
<span class="t" style="left:833.5px;top:27.5px;color:#000;letter-spacing:0.001px">L</span>
<div class="bt" style="left:846px;top:24px;background:linear-gradient(to bottom,#1aff1a,#000),linear-gradient(to bottom right,#1a0000,#ff1a1a 50%,#1a1aff);background-blend-mode:screen;border-top:1px solid #c4c4f4;border-left:1px solid #c4c4f4;border-bottom:1px solid #38389a;border-right:1px solid #38389a"></div>
<span class="t" style="left:850.5px;top:27.5px;color:#000;letter-spacing:0.001px">C</span>
<div class="nm" style="top:42px;background:#808080;border-top:1px solid #a3a3a3;border-left:1px solid #a3a3a3;border-bottom:1px solid #484848;border-right:1px solid #484848"></div>
<span class="t h" style="left:646.5px;top:45.5px;color:#fff;letter-spacing:0.001px">ala</span>
<div class="bt" style="left:778px;top:42px;background:#8080ff;border-top:1px solid #a8a8ff;border-left:1px solid #a8a8ff;border-bottom:1px solid #5c5cb8;border-right:1px solid #5c5cb8"></div>
<span class="t" style="left:782.5px;top:45.5px;color:#000;letter-spacing:0.001px">A</span>
<div class="bt" style="left:795px;top:42px;background:#9e9ecd;border-top:1px solid #bcbce0;border-left:1px solid #bcbce0;border-bottom:1px solid #72729a;border-right:1px solid #72729a"></div>
<span class="t" style="left:799.5px;top:45.5px;color:#000;letter-spacing:0.001px">S</span>
<div class="bt" style="left:812px;top:42px;background:#686898;border-top:1px solid #8a8ab4;border-left:1px solid #8a8ab4;border-bottom:1px solid #4a4a70;border-right:1px solid #4a4a70"></div>
<span class="t" style="left:816.5px;top:45.5px;color:#000;letter-spacing:0.001px">H</span>
<div class="bt" style="left:829px;top:42px;background:#8080ff;border-top:1px solid #a8a8ff;border-left:1px solid #a8a8ff;border-bottom:1px solid #5c5cb8;border-right:1px solid #5c5cb8"></div>
<span class="t" style="left:833.5px;top:45.5px;color:#000;letter-spacing:0.001px">L</span>
<div class="bt" style="left:846px;top:42px;background:linear-gradient(to bottom,#1aff1a,#000),linear-gradient(to bottom right,#1a0000,#ff1a1a 50%,#1a1aff);background-blend-mode:screen;border-top:1px solid #c4c4f4;border-left:1px solid #c4c4f4;border-bottom:1px solid #38389a;border-right:1px solid #38389a"></div>
<span class="t" style="left:850.5px;top:45.5px;color:#000;letter-spacing:0.001px">C</span>
<div class="nm" style="top:60px;background:#404040;border-top:1px solid #707070;border-left:1px solid #707070;border-bottom:1px solid #282828;border-right:1px solid #282828"></div>
<span class="t h" style="left:646.5px;top:63.5px;color:#fff;letter-spacing:0.001px">(pk1)</span>
<div class="bt" style="left:778px;top:60px;background:#8080ff;border-top:1px solid #a8a8ff;border-left:1px solid #a8a8ff;border-bottom:1px solid #5c5cb8;border-right:1px solid #5c5cb8"></div>
<span class="t" style="left:782.5px;top:63.5px;color:#000;letter-spacing:0.001px">A</span>
<div class="bt" style="left:795px;top:60px;background:#9e9ecd;border-top:1px solid #bcbce0;border-left:1px solid #bcbce0;border-bottom:1px solid #72729a;border-right:1px solid #72729a"></div>
<span class="t" style="left:799.5px;top:63.5px;color:#000;letter-spacing:0.001px">S</span>
<div class="bt" style="left:812px;top:60px;background:#686898;border-top:1px solid #8a8ab4;border-left:1px solid #8a8ab4;border-bottom:1px solid #4a4a70;border-right:1px solid #4a4a70"></div>
<span class="t" style="left:816.5px;top:63.5px;color:#000;letter-spacing:0.001px">H</span>
<div class="bt" style="left:829px;top:60px;background:#8080ff;border-top:1px solid #a8a8ff;border-left:1px solid #a8a8ff;border-bottom:1px solid #5c5cb8;border-right:1px solid #5c5cb8"></div>
<span class="t" style="left:833.5px;top:63.5px;color:#000;letter-spacing:0.001px">L</span>
<div class="bt" style="left:846px;top:60px;background:linear-gradient(to bottom,#1aff1a,#000),linear-gradient(to bottom right,#1a0000,#ff1a1a 50%,#1a1aff);background-blend-mode:screen;border-top:1px solid #c4c4f4;border-left:1px solid #c4c4f4;border-bottom:1px solid #38389a;border-right:1px solid #38389a"></div>
<span class="t" style="left:850.5px;top:63.5px;color:#000;letter-spacing:0.001px">C</span>
<div class="nm" style="top:78px;background:#404040;border-top:1px solid #707070;border-left:1px solid #707070;border-bottom:1px solid #282828;border-right:1px solid #282828"></div>
<span class="t h" style="left:646.5px;top:81.5px;color:#fff;letter-spacing:0.001px">(pkmol)</span>
<div class="bt" style="left:778px;top:78px;background:#8080ff;border-top:1px solid #a8a8ff;border-left:1px solid #a8a8ff;border-bottom:1px solid #5c5cb8;border-right:1px solid #5c5cb8"></div>
<span class="t" style="left:782.5px;top:81.5px;color:#000;letter-spacing:0.001px">A</span>
<div class="bt" style="left:795px;top:78px;background:#9e9ecd;border-top:1px solid #bcbce0;border-left:1px solid #bcbce0;border-bottom:1px solid #72729a;border-right:1px solid #72729a"></div>
<span class="t" style="left:799.5px;top:81.5px;color:#000;letter-spacing:0.001px">S</span>
<div class="bt" style="left:812px;top:78px;background:#686898;border-top:1px solid #8a8ab4;border-left:1px solid #8a8ab4;border-bottom:1px solid #4a4a70;border-right:1px solid #4a4a70"></div>
<span class="t" style="left:816.5px;top:81.5px;color:#000;letter-spacing:0.001px">H</span>
<div class="bt" style="left:829px;top:78px;background:#8080ff;border-top:1px solid #a8a8ff;border-left:1px solid #a8a8ff;border-bottom:1px solid #5c5cb8;border-right:1px solid #5c5cb8"></div>
<span class="t" style="left:833.5px;top:81.5px;color:#000;letter-spacing:0.001px">L</span>
<div class="bt" style="left:846px;top:78px;background:linear-gradient(to bottom,#1aff1a,#000),linear-gradient(to bottom right,#1a0000,#ff1a1a 50%,#1a1aff);background-blend-mode:screen;border-top:1px solid #c4c4f4;border-left:1px solid #c4c4f4;border-bottom:1px solid #38389a;border-right:1px solid #38389a"></div>
<span class="t" style="left:850.5px;top:81.5px;color:#000;letter-spacing:0.001px">C</span>
<div class="nm" style="top:96px;background:#404040;border-top:1px solid #707070;border-left:1px solid #707070;border-bottom:1px solid #282828;border-right:1px solid #282828"></div>
<span class="t h" style="left:646.5px;top:99.5px;color:#fff;letter-spacing:0.001px">(pkresi)</span>
<div class="bt" style="left:778px;top:96px;background:#8080ff;border-top:1px solid #a8a8ff;border-left:1px solid #a8a8ff;border-bottom:1px solid #5c5cb8;border-right:1px solid #5c5cb8"></div>
<span class="t" style="left:782.5px;top:99.5px;color:#000;letter-spacing:0.001px">A</span>
<div class="bt" style="left:795px;top:96px;background:#9e9ecd;border-top:1px solid #bcbce0;border-left:1px solid #bcbce0;border-bottom:1px solid #72729a;border-right:1px solid #72729a"></div>
<span class="t" style="left:799.5px;top:99.5px;color:#000;letter-spacing:0.001px">S</span>
<div class="bt" style="left:812px;top:96px;background:#686898;border-top:1px solid #8a8ab4;border-left:1px solid #8a8ab4;border-bottom:1px solid #4a4a70;border-right:1px solid #4a4a70"></div>
<span class="t" style="left:816.5px;top:99.5px;color:#000;letter-spacing:0.001px">H</span>
<div class="bt" style="left:829px;top:96px;background:#8080ff;border-top:1px solid #a8a8ff;border-left:1px solid #a8a8ff;border-bottom:1px solid #5c5cb8;border-right:1px solid #5c5cb8"></div>
<span class="t" style="left:833.5px;top:99.5px;color:#000;letter-spacing:0.001px">L</span>
<div class="bt" style="left:846px;top:96px;background:linear-gradient(to bottom,#1aff1a,#000),linear-gradient(to bottom right,#1a0000,#ff1a1a 50%,#1a1aff);background-blend-mode:screen;border-top:1px solid #c4c4f4;border-left:1px solid #c4c4f4;border-bottom:1px solid #38389a;border-right:1px solid #38389a"></div>
<span class="t" style="left:850.5px;top:99.5px;color:#000;letter-spacing:0.001px">C</span>
<div class="nm" style="top:114px;background:#404040;border-top:1px solid #707070;border-left:1px solid #707070;border-bottom:1px solid #282828;border-right:1px solid #282828"></div>
<span class="t h" style="left:646.5px;top:117.5px;color:#fff;letter-spacing:0.001px">(pkchain)</span>
<div class="bt" style="left:778px;top:114px;background:#8080ff;border-top:1px solid #a8a8ff;border-left:1px solid #a8a8ff;border-bottom:1px solid #5c5cb8;border-right:1px solid #5c5cb8"></div>
<span class="t" style="left:782.5px;top:117.5px;color:#000;letter-spacing:0.001px">A</span>
<div class="bt" style="left:795px;top:114px;background:#9e9ecd;border-top:1px solid #bcbce0;border-left:1px solid #bcbce0;border-bottom:1px solid #72729a;border-right:1px solid #72729a"></div>
<span class="t" style="left:799.5px;top:117.5px;color:#000;letter-spacing:0.001px">S</span>
<div class="bt" style="left:812px;top:114px;background:#686898;border-top:1px solid #8a8ab4;border-left:1px solid #8a8ab4;border-bottom:1px solid #4a4a70;border-right:1px solid #4a4a70"></div>
<span class="t" style="left:816.5px;top:117.5px;color:#000;letter-spacing:0.001px">H</span>
<div class="bt" style="left:829px;top:114px;background:#8080ff;border-top:1px solid #a8a8ff;border-left:1px solid #a8a8ff;border-bottom:1px solid #5c5cb8;border-right:1px solid #5c5cb8"></div>
<span class="t" style="left:833.5px;top:117.5px;color:#000;letter-spacing:0.001px">L</span>
<div class="bt" style="left:846px;top:114px;background:linear-gradient(to bottom,#1aff1a,#000),linear-gradient(to bottom right,#1a0000,#ff1a1a 50%,#1a1aff);background-blend-mode:screen;border-top:1px solid #c4c4f4;border-left:1px solid #c4c4f4;border-bottom:1px solid #38389a;border-right:1px solid #38389a"></div>
<span class="t" style="left:850.5px;top:117.5px;color:#000;letter-spacing:0.001px">C</span>
<div class="nm" style="top:132px;background:#404040;border-top:1px solid #707070;border-left:1px solid #707070;border-bottom:1px solid #282828;border-right:1px solid #282828"></div>
<span class="t h" style="left:646.5px;top:135.5px;color:#fff;letter-spacing:0.001px">(pkobject)</span>
<div class="bt" style="left:778px;top:132px;background:#8080ff;border-top:1px solid #a8a8ff;border-left:1px solid #a8a8ff;border-bottom:1px solid #5c5cb8;border-right:1px solid #5c5cb8"></div>
<span class="t" style="left:782.5px;top:135.5px;color:#000;letter-spacing:0.001px">A</span>
<div class="bt" style="left:795px;top:132px;background:#9e9ecd;border-top:1px solid #bcbce0;border-left:1px solid #bcbce0;border-bottom:1px solid #72729a;border-right:1px solid #72729a"></div>
<span class="t" style="left:799.5px;top:135.5px;color:#000;letter-spacing:0.001px">S</span>
<div class="bt" style="left:812px;top:132px;background:#686898;border-top:1px solid #8a8ab4;border-left:1px solid #8a8ab4;border-bottom:1px solid #4a4a70;border-right:1px solid #4a4a70"></div>
<span class="t" style="left:816.5px;top:135.5px;color:#000;letter-spacing:0.001px">H</span>
<div class="bt" style="left:829px;top:132px;background:#8080ff;border-top:1px solid #a8a8ff;border-left:1px solid #a8a8ff;border-bottom:1px solid #5c5cb8;border-right:1px solid #5c5cb8"></div>
<span class="t" style="left:833.5px;top:135.5px;color:#000;letter-spacing:0.001px">L</span>
<div class="bt" style="left:846px;top:132px;background:linear-gradient(to bottom,#1aff1a,#000),linear-gradient(to bottom right,#1a0000,#ff1a1a 50%,#1a1aff);background-blend-mode:screen;border-top:1px solid #c4c4f4;border-left:1px solid #c4c4f4;border-bottom:1px solid #38389a;border-right:1px solid #38389a"></div>
<span class="t" style="left:850.5px;top:135.5px;color:#000;letter-spacing:0.001px">C</span>
<div class="abs" style="left:643px;top:23px;width:1px;height:478px;background:#464646"></div>
<div class="abs" style="left:643px;top:377px;width:220px;height:1px;background:#000"></div>
<div class="abs" style="left:643px;top:378px;width:220px;height:123px;background:#333"></div>
<span class="t h" style="left:645.5px;top:381.5px;color:#33ff33;letter-spacing:0.001px">Mouse Mode </span>
<span class="t h" style="left:733.5px;top:381.5px;color:#ff8080;letter-spacing:0.001px">3-Button Editing</span>
<span class="t h" style="left:650.5px;top:393.5px;color:#ff8080;letter-spacing:0.001px">Buttons</span>
<span class="t h" style="left:687.5px;top:393.5px;color:#8080ff;letter-spacing:0.001px">    L    M    R  Wheel</span>
<span class="t h" style="left:656.5px;top:405.5px;color:#ff8080;letter-spacing:0.001px">&amp;</span>
<span class="t h" style="left:668.5px;top:405.5px;color:#ff8080;letter-spacing:0.001px">Keys</span>
<span class="t h" style="left:708.5px;top:405.5px;color:#e0e0e0;letter-spacing:0.001px">Rota Move MovZ Slab</span>
<span class="t h" style="left:668.5px;top:417.5px;color:#8080ff;letter-spacing:0.001px">Shft</span>
<span class="t h" style="left:708.5px;top:417.5px;color:#e0e0e0;letter-spacing:0.001px">RotF MovF MvFZ MovS</span>
<span class="t h" style="left:668.5px;top:429.5px;color:#8080ff;letter-spacing:0.001px">Ctrl</span>
<span class="t h" style="left:708.5px;top:429.5px;color:#e0e0e0;letter-spacing:0.001px">TorF +/-  PkTB MvSZ</span>
<span class="t h" style="left:668.5px;top:441.5px;color:#8080ff;letter-spacing:0.001px">CtSh</span>
<span class="t h" style="left:708.5px;top:441.5px;color:#e0e0e0;letter-spacing:0.001px">MovA Orig Clip MovZ</span>
<span class="t h" style="left:645.5px;top:453.5px;color:#8080ff;letter-spacing:0.001px">SnglClk</span>
<span class="t h" style="left:708.5px;top:453.5px;color:#e0e0e0;letter-spacing:0.001px">PkAt Cent Menu</span>
<span class="t h" style="left:645.5px;top:465.5px;color:#8080ff;letter-spacing:0.001px"> DblClk</span>
<span class="t h" style="left:708.5px;top:465.5px;color:#e0e0e0;letter-spacing:0.001px">TorF DrgM PkTB</span>
<span class="t h" style="left:645.5px;top:477.5px;color:#33ff33;letter-spacing:0.001px">Picking</span>
<span class="t h" style="left:708.5px;top:477.5px;color:#ff8080;letter-spacing:0.001px">Atoms (and Joints)</span>
<span class="t h" style="left:645.5px;top:489.5px;color:#33ff33;letter-spacing:0.001px">State</span>
<span class="t h" style="left:692.5px;top:489.5px;color:#e0e0e0;letter-spacing:0.001px">   2/   2</span>
<span class="t h" style="left:6.5px;top:506.5px;color:#ccccff;letter-spacing:0.001px">PyMOL&gt;_</span>
<div class="abs" style="left:643px;top:501px;width:220px;height:2px;background:#000"></div>
<div class="abs" style="left:643px;top:503px;width:220px;height:18px;background:#3a3a3a"></div>
<div class="abs" style="left:644px;top:503px;width:6px;height:17px;background:linear-gradient(to right,#808080 70%,#4a4a4a 70%);border-left:1px solid #dcdcdc;border-top:1px solid #c8c8c8;box-sizing:border-box"></div>
<div class="abs" style="left:651px;top:503px;width:22.3px;height:17px;background:#808080;border-top:1px solid #a6a6a6;border-left:1px solid #a6a6a6;border-right:1px solid #505050;border-bottom:1px solid #505050;box-sizing:border-box"></div>
<div class="abs" style="left:674.5px;top:503px;width:22.3px;height:17px;background:#808080;border-top:1px solid #a6a6a6;border-left:1px solid #a6a6a6;border-right:1px solid #505050;border-bottom:1px solid #505050;box-sizing:border-box"></div>
<div class="abs" style="left:698px;top:503px;width:22.3px;height:17px;background:#808080;border-top:1px solid #a6a6a6;border-left:1px solid #a6a6a6;border-right:1px solid #505050;border-bottom:1px solid #505050;box-sizing:border-box"></div>
<div class="abs" style="left:721.5px;top:503px;width:22.3px;height:17px;background:#808080;border-top:1px solid #a6a6a6;border-left:1px solid #a6a6a6;border-right:1px solid #505050;border-bottom:1px solid #505050;box-sizing:border-box"></div>
<div class="abs" style="left:745px;top:503px;width:22.3px;height:17px;background:#808080;border-top:1px solid #a6a6a6;border-left:1px solid #a6a6a6;border-right:1px solid #505050;border-bottom:1px solid #505050;box-sizing:border-box"></div>
<div class="abs" style="left:768.5px;top:503px;width:22.3px;height:17px;background:#808080;border-top:1px solid #a6a6a6;border-left:1px solid #a6a6a6;border-right:1px solid #505050;border-bottom:1px solid #505050;box-sizing:border-box"></div>
<div class="abs" style="left:792px;top:503px;width:22.3px;height:17px;background:#808080;border-top:1px solid #a6a6a6;border-left:1px solid #a6a6a6;border-right:1px solid #505050;border-bottom:1px solid #505050;box-sizing:border-box"></div>
<div class="abs" style="left:815.5px;top:503px;width:22.3px;height:17px;background:#808080;border-top:1px solid #a6a6a6;border-left:1px solid #a6a6a6;border-right:1px solid #505050;border-bottom:1px solid #505050;box-sizing:border-box"></div>
<div class="abs" style="left:839px;top:503px;width:22.3px;height:17px;background:#808080;border-top:1px solid #a6a6a6;border-left:1px solid #a6a6a6;border-right:1px solid #505050;border-bottom:1px solid #505050;box-sizing:border-box"></div>
<svg class="abs" style="left:0;top:0" width="866" height="525" fill="#ffb8b8">
<rect x="656.8" y="507" width="1.5" height="8"/><path d="M665 507.6 L665 515 L658.3 511.3 Z"/>
<path d="M689.3 507.8 L682 511.4 L689.3 515 L686.6 511.4 Z"/>
<rect x="704" y="508" width="8" height="8"/>
<path d="M728.3 506.6 L737.2 511.8 L728.3 517 Z"/>
<path d="M751 508 L759.6 511.8 L751 515.6 L754 511.8 Z"/>
<path d="M775 507.6 L775 515 L781.8 511.3 Z"/><rect x="781.8" y="507" width="1.6" height="8"/>
<path d="M820.9 508 L832.2 508 L826.5 516.3 Z"/>
</svg>
<span class="t h" style="left:798px;top:507px;color:#d8d8d8;letter-spacing:0.001px">S</span>
<span class="t h" style="left:845px;top:507px;color:#d8d8d8;letter-spacing:0.001px">F</span>
</body></html>
